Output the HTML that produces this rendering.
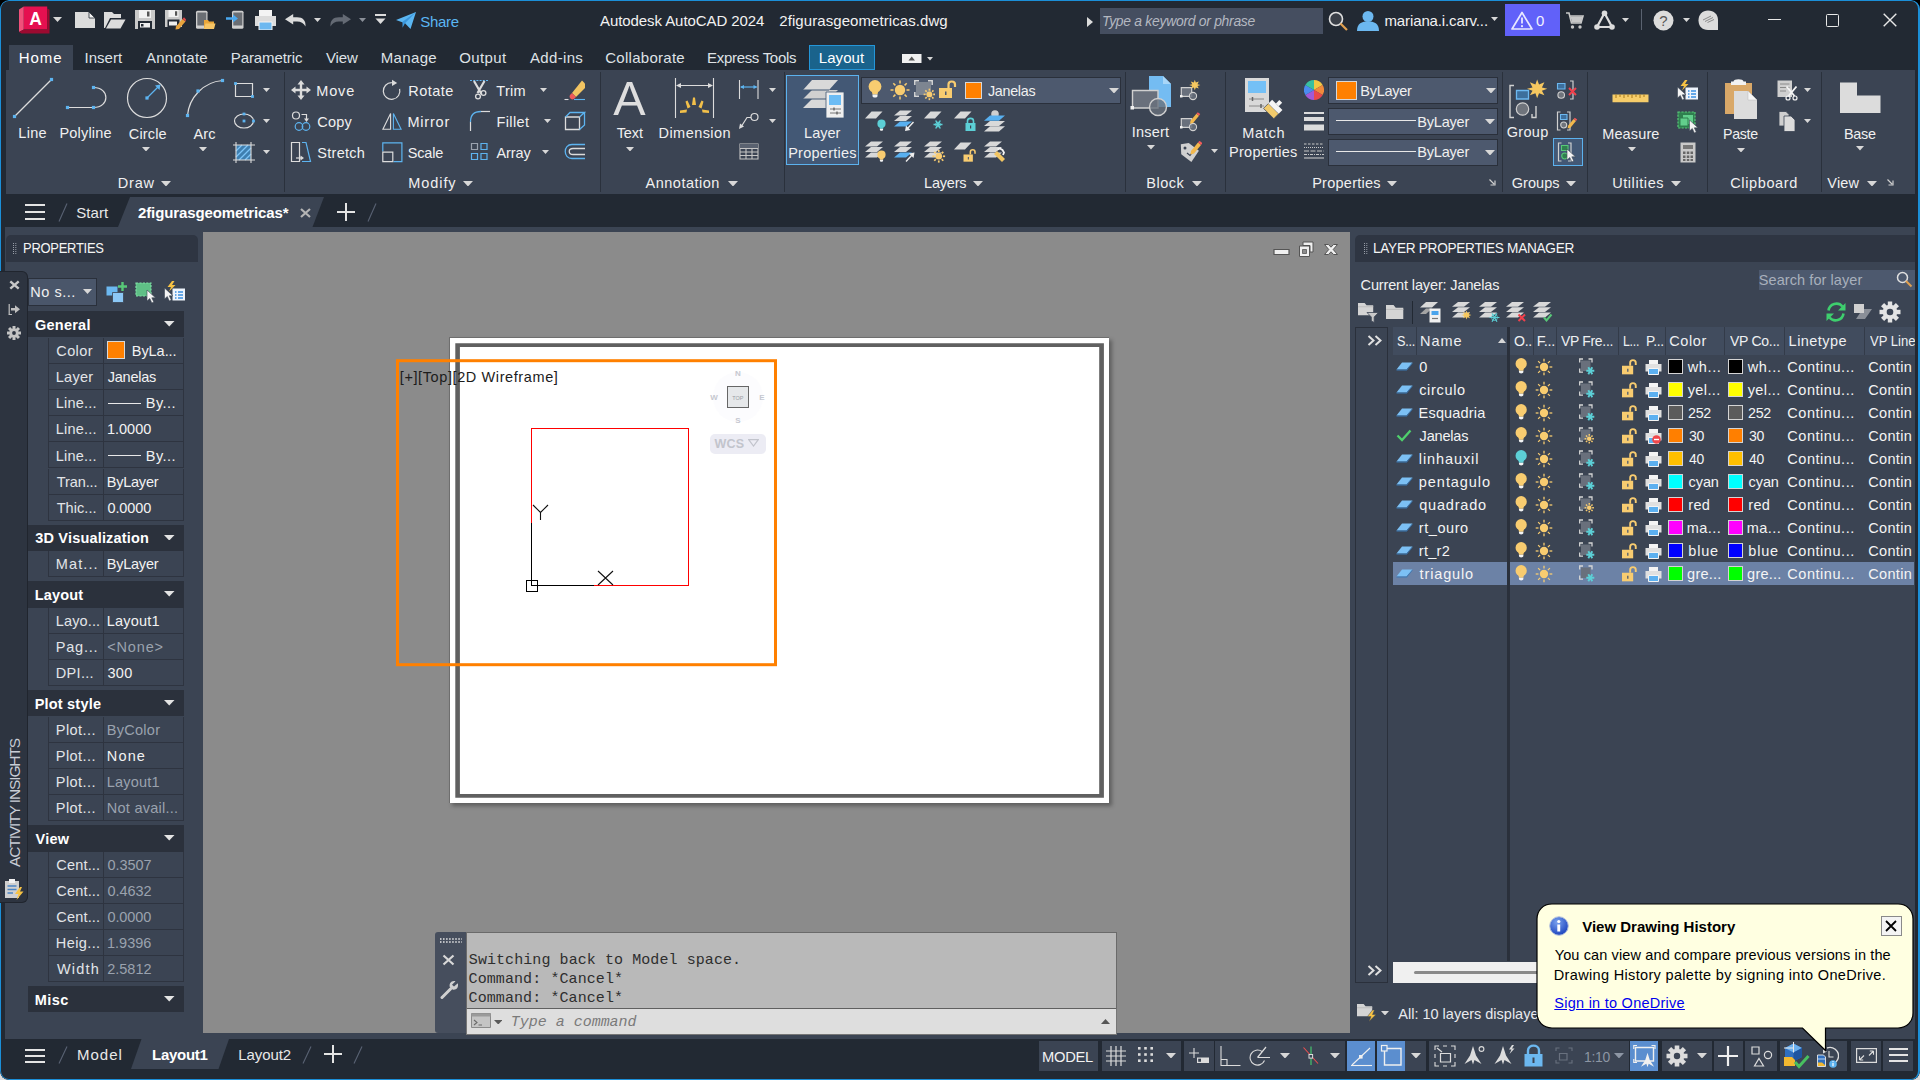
<!DOCTYPE html>
<html><head><meta charset="utf-8"><title>Autodesk AutoCAD 2024 - 2figurasgeometricas.dwg</title>
<style>
html,body{margin:0;padding:0;overflow:hidden}
body{background:linear-gradient(#000 0,#000 540px,#dcdcdc 540px,#dcdcdc 1080px) no-repeat;background-size:1920px 1080px;background-color:#000}
#w{position:relative;width:1920px;height:1080px;overflow:hidden;background:#222933;font-family:"Liberation Sans",sans-serif;font-size:14.5px;color:#f0f0f0;border-radius:9px 9px 9px 9px}
#w div,#w svg{position:absolute}
#w .t{white-space:nowrap;line-height:20px}
</style></head><body><div id="w">
<div style="left:6px;top:70px;width:1909px;height:124px;background:#3b4453;"></div>
<div style="left:5px;top:227px;width:1910px;height:812px;background:#3b4453;"></div>
<div style="left:203px;top:232px;width:1147px;height:801px;background:#8b8b8b;"></div>
<svg style="left:18px;top:5px;" width="33" height="30" viewBox="0 0 33 30"><path d="M1 4.5L5.8 1.5V24.5L1 27Z" fill="#f0507a"/><path d="M5.8 1.5H29.2V24.5H5.8Z" fill="#e51050"/><path d="M1 27L5.8 24.5H29.2V3.5L31.5 4.8V28.5H3.5Z" fill="#9c0a30"/></svg>
<div class="t" style="left:29.19px;top:9.44px;font-size:17.5px;color:#fff;font-weight:bold;">A</div>
<svg style="left:53px;top:17px;" width="9" height="5" viewBox="0 0 9 5"><path d="M0 0H9L4.5 5Z" fill="#d8d8d8"/></svg>
<svg style="left:75px;top:12px;" width="21" height="17" viewBox="0 0 21 17"><path d="M0 0H14L20 6V16H0Z" fill="#dcdcdc"/><path d="M14 0V6H20Z" fill="#f4f4f4" stroke="#222933" stroke-width="0.8"/></svg>
<svg style="left:104px;top:11px;" width="22" height="18" viewBox="0 0 22 18"><path d="M0 1H8L10 3H17V7H6L1 17H0Z" fill="#dcdcdc"/><path d="M7 8.5H21.5L16.5 17.5H2Z" fill="#dcdcdc"/></svg>
<svg style="left:135px;top:10.3px;" width="21" height="20" viewBox="0 0 21 20"><path d="M0 0H20V19H0Z" fill="#c9c9c9"/><path d="M4 0H16V8H4Z" fill="#f2f2f2"/><path d="M12 1.5H14.5V6.5H12Z" fill="#555"/><path d="M3 11H17V19H3Z" fill="#222933"/><path d="M5 13H15V17.5H5Z" fill="#eee"/><path d="M6 14H8.5V16.5H6Z" fill="#222933"/></svg>
<svg style="left:165px;top:10.3px;" width="21" height="20" viewBox="0 0 21 20"><path d="M0 0H17V17H0Z" fill="#c9c9c9"/><path d="M3.5 0H13.5V7H3.5Z" fill="#f2f2f2"/><path d="M10 1.2H12.2V5.8H10Z" fill="#555"/><path d="M2.5 9.5H14.5V17H2.5Z" fill="#222933"/><path d="M4 11.5H12V15.5H4Z" fill="#eee"/><path d="M11 16.5L17.5 9L20.5 11.5L14 19L10.5 19.5Z" fill="#e8a33c"/><path d="M17.5 9L19 7.2L21 9.5L20.5 11.5Z" fill="#e04a4a"/></svg>
<svg style="left:195px;top:10px;" width="21" height="20" viewBox="0 0 21 20"><rect x="1" y="0.8" width="11.5" height="18" rx="1.5" fill="#cfcfcf"/><rect x="2.3" y="2.5" width="9" height="13" fill="#6a6e74"/><path d="M9 10H13L14 11.5H19V19H9Z" fill="#e9a63a"/><path d="M10.5 13.5H20.5L19 19H9Z" fill="#f6c566"/></svg>
<svg style="left:226px;top:10px;" width="18" height="20" viewBox="0 0 18 20"><rect x="6" y="0.8" width="11.5" height="18" rx="1.5" fill="#cfcfcf"/><rect x="7.3" y="2.5" width="9" height="13" fill="#6a6e74"/><path d="M0 7.2H7V4.5L12 8.5L7 12.5V9.8H0Z" fill="#4aa8f0"/></svg>
<svg style="left:255px;top:10px;" width="21" height="20" viewBox="0 0 21 20"><path d="M4 0H17V6H4Z" fill="#f4f4f4"/><path d="M0 6H21V16H0Z" fill="#dcdcdc"/><path d="M4 12H17V20H4Z" fill="#6cb8f0" stroke="#f4f4f4" stroke-width="1"/></svg>
<svg style="left:285px;top:13.5px;" width="22" height="13" viewBox="0 0 22 13"><path d="M0 5.2L8.2 0V3.2H12C18 3.2 21 6.5 20.5 12.5C18.5 9 16 7.4 12 7.4H8.2V10.5Z" fill="#dcdcdc"/></svg>
<svg style="left:314px;top:18px;" width="7" height="4" viewBox="0 0 7 4"><path d="M0 0H7L3.5 4Z" fill="#d8d8d8"/></svg>
<svg style="left:329px;top:13.5px;" width="22" height="13" viewBox="0 0 22 13"><path d="M22 5.2L13.8 0V3.2H10C4 3.2 1 6.5 1.5 12.5C3.5 9 6 7.4 10 7.4H13.8V10.5Z" fill="#646a74"/></svg>
<svg style="left:359px;top:18px;" width="7" height="4" viewBox="0 0 7 4"><path d="M0 0H7L3.5 4Z" fill="#8a8f98"/></svg>
<svg style="left:375px;top:14px;" width="11" height="10" viewBox="0 0 11 10"><path d="M0 0H11V2H0Z" fill="#dcdcdc"/><path d="M0.5 4.5H10.5L5.5 10Z" fill="#dcdcdc"/></svg>
<svg style="left:396px;top:12px;" width="20" height="17" viewBox="0 0 20 17"><path d="M0 8L20 0L14.5 17L9 11.2Z" fill="#5bb6f2"/><path d="M9 11.2L20 0L6.5 9.8V15.8Z" fill="#3a96dc"/></svg>
<div class="t" style="left:420.32px;top:11.80px;font-size:15px;color:#5bb6f2;letter-spacing:-0.295px;">Share</div>
<div class="t" style="left:599.97px;top:10.80px;font-size:15px;color:#f2f2f2;letter-spacing:-0.074px;">Autodesk AutoCAD 2024</div>
<div class="t" style="left:779.25px;top:10.80px;font-size:15px;color:#f2f2f2;letter-spacing:0.076px;">2figurasgeometricas.dwg</div>
<svg style="left:1087px;top:17px;" width="6" height="10" viewBox="0 0 6 10"><path d="M0 0L6 5L0 10Z" fill="#dcdcdc"/></svg>
<div style="left:1100px;top:8px;width:223px;height:26px;background:#454e60;"></div>
<div class="t" style="left:1101.75px;top:10.98px;color:#b4b8c0;letter-spacing:-0.300px;font-style:italic;transform:scaleX(0.9600);transform-origin:left center;">Type a keyword or phrase</div>
<svg style="left:1328px;top:11px;" width="21" height="21" viewBox="0 0 21 21"><circle cx="8" cy="8" r="6.5" fill="#3a3f48" stroke="#e0e0e0" stroke-width="1.6"/><path d="M12.5 12.5L19 19" stroke="#e0a050" stroke-width="2.2"/></svg>
<svg style="left:1357px;top:11px;" width="22" height="20" viewBox="0 0 22 20"><circle cx="11" cy="5.5" r="5.5" fill="#6cb8f0"/><path d="M0 20C0 12 5 10.5 11 10.5S22 12 22 20Z" fill="#6cb8f0"/></svg>
<div class="t" style="left:1384.50px;top:11.30px;font-size:15px;color:#f2f2f2;letter-spacing:-0.126px;">mariana.i.carv...</div>
<svg style="left:1491px;top:17px;" width="7" height="4" viewBox="0 0 7 4"><path d="M0 0H7L3.5 4Z" fill="#d8d8d8"/></svg>
<div style="left:1505px;top:4px;width:55px;height:32px;background:#6161f9;"></div>
<svg style="left:1511px;top:11px;" width="22" height="19" viewBox="0 0 22 19"><path d="M11 1.5L21 18H1Z" fill="none" stroke="#e8e8ff" stroke-width="1.7" stroke-linejoin="round"/><path d="M11 6.5V12.5" stroke="#e8e8ff" stroke-width="1.8"/><circle cx="11" cy="15.2" r="1.1" fill="#e8e8ff"/></svg>
<div class="t" style="left:1535.91px;top:10.80px;font-size:15px;color:#f2f2ff;">0</div>
<svg style="left:1566px;top:12px;" width="18" height="18" viewBox="0 0 18 18"><path d="M0 1H3L5.5 11H15L17 4H4" fill="none" stroke="#c8c8c8" stroke-width="1.6"/><path d="M4.5 4.5H16.5L15 10.5H6Z" fill="#c8c8c8"/><circle cx="6.5" cy="15" r="1.7" fill="#c8c8c8"/><circle cx="14" cy="15" r="1.7" fill="#c8c8c8"/></svg>
<svg style="left:1594px;top:10px;" width="21" height="20" viewBox="0 0 21 20"><path d="M10.5 3L3 17H18Z" fill="none" stroke="#dcdcdc" stroke-width="2.2"/><circle cx="10.5" cy="3.2" r="2.8" fill="#dcdcdc"/><circle cx="3" cy="17" r="2.8" fill="#dcdcdc"/><circle cx="18" cy="17" r="2.8" fill="#dcdcdc"/></svg>
<svg style="left:1622px;top:18px;" width="7" height="4" viewBox="0 0 7 4"><path d="M0 0H7L3.5 4Z" fill="#d8d8d8"/></svg>
<div style="left:1641px;top:9px;width:1px;height:21px;background:#5a6270;"></div>
<svg style="left:1653px;top:10px;" width="21" height="21" viewBox="0 0 21 21"><circle cx="10.5" cy="10.5" r="10" fill="#dcdcdc"/></svg>
<div class="t" style="left:1659.30px;top:11.30px;font-size:15px;color:#555;">?</div>
<svg style="left:1683px;top:18px;" width="7" height="4" viewBox="0 0 7 4"><path d="M0 0H7L3.5 4Z" fill="#d8d8d8"/></svg>
<svg style="left:1698px;top:10px;" width="21" height="21" viewBox="0 0 21 21"><path d="M10 0.5C16 0.5 20 4.5 20 10V20H10C4 20 0.5 16 0.5 10.2C0.5 4.5 4.5 0.5 10 0.5Z" fill="#dcdcdc"/><path d="M5 10L13 6M7 11.5L15 7.5M9.5 12.5L16 9.5" stroke="#8a8a8a" stroke-width="1"/></svg>
<div style="left:1767.5px;top:19px;width:13px;height:1.4px;background:#e8e8e8;"></div>
<div style="left:1826px;top:14px;width:10.5px;height:10.5px;border:1.4px solid #e8e8e8;border-radius:1.5px"></div>
<svg style="left:1883px;top:13px;" width="14" height="14" viewBox="0 0 14 14"><path d="M0.7 0.7L13.3 13.3M13.3 0.7L0.7 13.3" stroke="#e8e8e8" stroke-width="1.4"/></svg>
<div style="left:9px;top:45px;width:64px;height:26px;background:#3b4453;"></div>
<div class="t" style="left:18.77px;top:48.10px;font-size:15px;color:#ffffff;letter-spacing:0.961px;">Home</div>
<div class="t" style="left:84.62px;top:48.10px;font-size:15px;color:#dfe2e6;">Insert</div>
<div class="t" style="left:145.97px;top:48.10px;font-size:15px;color:#dfe2e6;letter-spacing:0.235px;">Annotate</div>
<div class="t" style="left:230.77px;top:48.10px;font-size:15px;color:#dfe2e6;letter-spacing:-0.099px;">Parametric</div>
<div class="t" style="left:325.93px;top:48.10px;font-size:15px;color:#dfe2e6;letter-spacing:-0.071px;">View</div>
<div class="t" style="left:380.77px;top:48.10px;font-size:15px;color:#dfe2e6;letter-spacing:0.338px;">Manage</div>
<div class="t" style="left:459.29px;top:48.10px;font-size:15px;color:#dfe2e6;letter-spacing:0.358px;">Output</div>
<div class="t" style="left:529.97px;top:48.10px;font-size:15px;color:#dfe2e6;letter-spacing:0.335px;">Add-ins</div>
<div class="t" style="left:605.24px;top:48.10px;font-size:15px;color:#dfe2e6;letter-spacing:0.271px;">Collaborate</div>
<div class="t" style="left:707.07px;top:48.10px;font-size:15px;color:#dfe2e6;letter-spacing:-0.300px;transform:scaleX(0.9997);transform-origin:left center;">Express Tools</div>
<div style="left:809px;top:45px;width:64px;height:23px;background:#1a638c;border:1px solid #2496d8"></div>
<div class="t" style="left:818.77px;top:48.10px;font-size:15px;color:#fff;letter-spacing:0.061px;">Layout</div>
<svg style="left:902px;top:54px;" width="20" height="9" viewBox="0 0 20 9"><rect width="19.5" height="9" fill="#f0f0f0"/><path d="M6.5 6.5L9.7 2.5L13 6.5Z" fill="#555"/></svg>
<svg style="left:927px;top:57px;" width="6" height="3.5" viewBox="0 0 6 3.5"><path d="M0 0H6L3.0 3.5Z" fill="#d8d8d8"/></svg>
<div style="left:283.5px;top:72px;width:1.2px;height:120px;background:#2a313c;"></div>
<div style="left:599.5px;top:72px;width:1.2px;height:120px;background:#2a313c;"></div>
<div style="left:783.5px;top:72px;width:1.2px;height:120px;background:#2a313c;"></div>
<div style="left:1124.5px;top:72px;width:1.2px;height:120px;background:#2a313c;"></div>
<div style="left:1224.5px;top:72px;width:1.2px;height:120px;background:#2a313c;"></div>
<div style="left:1501.5px;top:72px;width:1.2px;height:120px;background:#2a313c;"></div>
<div style="left:1586.5px;top:72px;width:1.2px;height:120px;background:#2a313c;"></div>
<div style="left:1707px;top:72px;width:1.2px;height:120px;background:#2a313c;"></div>
<div style="left:1820.5px;top:72px;width:1.2px;height:120px;background:#2a313c;"></div>
<div class="t" style="left:117.81px;top:172.98px;letter-spacing:0.773px;">Draw</div>
<svg style="left:161px;top:180.5px;" width="10" height="5.5" viewBox="0 0 10 5.5"><path d="M0 0H10L5.0 5.5Z" fill="#d8d8d8"/></svg>
<div class="t" style="left:408.31px;top:172.98px;letter-spacing:0.922px;">Modify</div>
<svg style="left:463px;top:180.5px;" width="10" height="5.5" viewBox="0 0 10 5.5"><path d="M0 0H10L5.0 5.5Z" fill="#d8d8d8"/></svg>
<div class="t" style="left:645.57px;top:172.98px;letter-spacing:0.504px;">Annotation</div>
<svg style="left:727.5px;top:180.5px;" width="10" height="5.5" viewBox="0 0 10 5.5"><path d="M0 0H10L5.0 5.5Z" fill="#d8d8d8"/></svg>
<div class="t" style="left:924.11px;top:172.98px;letter-spacing:-0.221px;">Layers</div>
<svg style="left:973px;top:180.5px;" width="10" height="5.5" viewBox="0 0 10 5.5"><path d="M0 0H10L5.0 5.5Z" fill="#d8d8d8"/></svg>
<div class="t" style="left:1146.31px;top:172.98px;letter-spacing:0.478px;">Block</div>
<svg style="left:1192px;top:180.5px;" width="10" height="5.5" viewBox="0 0 10 5.5"><path d="M0 0H10L5.0 5.5Z" fill="#d8d8d8"/></svg>
<div class="t" style="left:1312.21px;top:172.98px;letter-spacing:0.248px;">Properties</div>
<svg style="left:1387px;top:180.5px;" width="10" height="5.5" viewBox="0 0 10 5.5"><path d="M0 0H10L5.0 5.5Z" fill="#d8d8d8"/></svg>
<div class="t" style="left:1511.77px;top:172.98px;letter-spacing:0.041px;">Groups</div>
<svg style="left:1566px;top:180.5px;" width="10" height="5.5" viewBox="0 0 10 5.5"><path d="M0 0H10L5.0 5.5Z" fill="#d8d8d8"/></svg>
<div class="t" style="left:1612.18px;top:172.98px;letter-spacing:0.577px;">Utilities</div>
<svg style="left:1671px;top:180.5px;" width="10" height="5.5" viewBox="0 0 10 5.5"><path d="M0 0H10L5.0 5.5Z" fill="#d8d8d8"/></svg>
<div class="t" style="left:1730.26px;top:172.98px;letter-spacing:0.626px;">Clipboard</div>
<div class="t" style="left:1827.34px;top:172.98px;letter-spacing:0.154px;">View</div>
<svg style="left:1867px;top:180.5px;" width="10" height="5.5" viewBox="0 0 10 5.5"><path d="M0 0H10L5.0 5.5Z" fill="#d8d8d8"/></svg>
<svg style="left:1489px;top:179px;" width="7" height="7" viewBox="0 0 7 7"><path d="M0.5 0.5L5 5M6 1.5V6H1.5" stroke="#cfcfcf" stroke-width="1.2" fill="none"/></svg>
<svg style="left:1887px;top:179px;" width="7" height="7" viewBox="0 0 7 7"><path d="M0.5 0.5L5 5M6 1.5V6H1.5" stroke="#cfcfcf" stroke-width="1.2" fill="none"/></svg>
<svg style="left:10px;top:76px;" width="50" height="50" viewBox="0 0 50 50"><path d="M4.5 40.5L41.5 3.5" stroke="#dcdcdc" stroke-width="1.2"/><rect x="2.9" y="38.9" width="3.2" height="3.2" fill="#5db4f0"/><rect x="39.9" y="1.9" width="3.2" height="3.2" fill="#5db4f0"/></svg>
<div class="t" style="left:18.31px;top:122.98px;letter-spacing:0.307px;">Line</div>
<svg style="left:62px;top:82px;" width="48" height="30" viewBox="0 0 48 30"><path d="M5.5 25.5H31.5M31.5 25.5C48 25.5 48 5.5 31.5 5.5" stroke="#dcdcdc" stroke-width="1.2" fill="none"/><rect x="3.9" y="23.9" width="3.2" height="3.2" fill="#5db4f0"/><rect x="29.9" y="23.9" width="3.2" height="3.2" fill="#5db4f0"/><rect x="29.9" y="3.9" width="3.2" height="3.2" fill="#5db4f0"/></svg>
<div class="t" style="left:59.41px;top:122.98px;letter-spacing:0.208px;">Polyline</div>
<svg style="left:124px;top:76px;" width="46" height="46" viewBox="0 0 46 46"><circle cx="23" cy="22" r="19.5" stroke="#dcdcdc" stroke-width="1.2" fill="none"/><path d="M23 22L35 10" stroke="#5db4f0" stroke-width="1.3"/><path d="M36.5 8.5L35.5 14L31 9.5Z" fill="#5db4f0"/><rect x="21.4" y="20.4" width="3.2" height="3.2" fill="#5db4f0"/></svg>
<div class="t" style="left:128.76px;top:123.68px;letter-spacing:0.165px;">Circle</div>
<svg style="left:142px;top:146.5px;" width="8" height="4.5" viewBox="0 0 8 4.5"><path d="M0 0H8L4.0 4.5Z" fill="#d8d8d8"/></svg>
<svg style="left:183px;top:76px;" width="44" height="44" viewBox="0 0 44 44"><path d="M4.5 39.5C6 22 20 6 39.5 4.5" stroke="#dcdcdc" stroke-width="1.2" fill="none"/><rect x="2.9" y="37.9" width="3.2" height="3.2" fill="#5db4f0"/><rect x="13.4" y="13.4" width="3.2" height="3.2" fill="#5db4f0"/><rect x="37.9" y="2.9" width="3.2" height="3.2" fill="#5db4f0"/></svg>
<div class="t" style="left:193.47px;top:123.68px;letter-spacing:0.080px;">Arc</div>
<svg style="left:199px;top:146.5px;" width="8" height="4.5" viewBox="0 0 8 4.5"><path d="M0 0H8L4.0 4.5Z" fill="#d8d8d8"/></svg>
<svg style="left:232px;top:80px;" width="24" height="18" viewBox="0 0 24 18"><path d="M3.5 3.5H20.5V16.5H3.5Z" stroke="#dcdcdc" stroke-width="1.2" fill="none"/><rect x="2.1" y="2.1" width="2.8" height="2.8" fill="#5db4f0"/><rect x="19.1" y="15.1" width="2.8" height="2.8" fill="#5db4f0"/></svg>
<svg style="left:263px;top:87.5px;" width="7" height="4" viewBox="0 0 7 4"><path d="M0 0H7L3.5 4Z" fill="#d8d8d8"/></svg>
<svg style="left:232px;top:111px;" width="24" height="20" viewBox="0 0 24 20"><ellipse cx="12" cy="10" rx="9.5" ry="7" stroke="#dcdcdc" stroke-width="1.2" fill="none"/><rect x="10.6" y="8.6" width="2.8" height="2.8" fill="#5db4f0"/><rect x="10.6" y="1.6" width="2.8" height="2.8" fill="#5db4f0"/><rect x="20.1" y="8.6" width="2.8" height="2.8" fill="#5db4f0"/></svg>
<svg style="left:263px;top:118.5px;" width="7" height="4" viewBox="0 0 7 4"><path d="M0 0H7L3.5 4Z" fill="#d8d8d8"/></svg>
<svg style="left:232px;top:141px;" width="24" height="22" viewBox="0 0 24 22"><path d="M4 4H19V19H4Z" fill="#3f7fb0"/><path d="M4 10L10 4M4 16L16 4M7 19L19 7M13 19L19 13" stroke="#7cc4f8" stroke-width="1.3"/><path d="M4 1V22M19 1V22M1 4H23M1 19H23" stroke="#dcdcdc" stroke-width="1.1"/></svg>
<svg style="left:263px;top:149.5px;" width="7" height="4" viewBox="0 0 7 4"><path d="M0 0H7L3.5 4Z" fill="#d8d8d8"/></svg>
<svg style="left:290px;top:79px;" width="22" height="22" viewBox="0 0 22 22"><path d="M11 1L14.5 5.5H12.2V9.8H16.5V7.5L21 11L16.5 14.5V12.2H12.2V16.5H14.5L11 21L7.5 16.5H9.8V12.2H5.5V14.5L1 11L5.5 7.5V9.8H9.8V5.5H7.5Z" fill="#dcdcdc"/></svg>
<div class="t" style="left:316.31px;top:81.18px;letter-spacing:0.826px;">Move</div>
<svg style="left:290px;top:110px;" width="22" height="22" viewBox="0 0 22 22"><circle cx="6" cy="5.5" r="3.5" stroke="#dcdcdc" stroke-width="1.2" fill="none"/><path d="M11.5 4.5H16.5V9" stroke="#dcdcdc" stroke-width="1.2" fill="none"/><path d="M14 8.5H19L16.5 12Z" fill="#dcdcdc"/><circle cx="9" cy="16.5" r="3.8" stroke="#5db4f0" stroke-width="1.2" fill="none"/><circle cx="16" cy="16.5" r="3.8" stroke="#5db4f0" stroke-width="1.2" fill="none"/></svg>
<div class="t" style="left:317.26px;top:111.88px;letter-spacing:0.238px;">Copy</div>
<svg style="left:290px;top:141px;" width="22" height="22" viewBox="0 0 22 22"><path d="M1.5 1.5H9.5V20.5H1.5Z" stroke="#dcdcdc" stroke-width="1.2" fill="none"/><path d="M12 1.5H16L20.5 20.5H12" stroke="#5db4f0" stroke-width="1.2" fill="none"/><path d="M6 17H11" stroke="#dcdcdc" stroke-width="1.2"/><path d="M10.5 14.5L14 17L10.5 19.5Z" fill="#dcdcdc"/></svg>
<div class="t" style="left:317.34px;top:142.78px;letter-spacing:0.261px;">Stretch</div>
<svg style="left:382px;top:79px;" width="22" height="22" viewBox="0 0 22 22"><path d="M17.6 9.8A8.3 8.3 0 1 1 9.8 3.7" stroke="#dcdcdc" stroke-width="1.2" fill="none"/><path d="M10 0.8L15.2 4L10 7Z" fill="#dcdcdc"/></svg>
<div class="t" style="left:408.31px;top:81.18px;letter-spacing:0.483px;">Rotate</div>
<svg style="left:382px;top:111px;" width="22" height="20" viewBox="0 0 22 20"><path d="M8.6 2.5V18.3H0.9Z" stroke="#dcdcdc" stroke-width="1.1" fill="none" stroke-linejoin="miter"/><path d="M11.4 2.5V18.3H19.1Z" stroke="#5db4f0" stroke-width="1.1" fill="none" stroke-linejoin="miter"/></svg>
<div class="t" style="left:407.51px;top:111.88px;letter-spacing:0.776px;">Mirror</div>
<svg style="left:382px;top:141px;" width="22" height="22" viewBox="0 0 22 22"><path d="M0.8 10.5V1.9H19.9V20.6H11.5" stroke="#5db4f0" stroke-width="1.2" fill="none"/><path d="M0.8 11.2H10.8V20.6H0.8Z" stroke="#dcdcdc" stroke-width="1.2" fill="none"/></svg>
<div class="t" style="left:407.84px;top:142.78px;letter-spacing:-0.192px;">Scale</div>
<svg style="left:469px;top:79px;" width="22" height="22" viewBox="0 0 22 22"><path d="M1 1.5H20" stroke="#5db4f0" stroke-width="1.2" stroke-dasharray="2 1.2"/><path d="M5 2L12.5 15M15.5 2L8.5 14" stroke="#dcdcdc" stroke-width="2.2"/><circle cx="9" cy="17.5" r="2.4" stroke="#dcdcdc" stroke-width="1.3" fill="none"/><circle cx="14.5" cy="14" r="2.4" stroke="#dcdcdc" stroke-width="1.3" fill="none"/></svg>
<div class="t" style="left:496.37px;top:81.18px;letter-spacing:0.244px;">Trim</div>
<svg style="left:540px;top:87.5px;" width="7" height="4" viewBox="0 0 7 4"><path d="M0 0H7L3.5 4Z" fill="#d8d8d8"/></svg>
<svg style="left:469px;top:110px;" width="22" height="22" viewBox="0 0 22 22"><path d="M1.5 21V12" stroke="#dcdcdc" stroke-width="1.2"/><path d="M1.5 12C1.5 5 5 1.5 12 1.5" stroke="#5db4f0" stroke-width="1.3" fill="none"/><path d="M12 1.5H21" stroke="#dcdcdc" stroke-width="1.2"/></svg>
<div class="t" style="left:496.41px;top:111.88px;letter-spacing:0.416px;">Fillet</div>
<svg style="left:544px;top:118.5px;" width="7" height="4" viewBox="0 0 7 4"><path d="M0 0H7L3.5 4Z" fill="#d8d8d8"/></svg>
<svg style="left:470px;top:142px;" width="20" height="20" viewBox="0 0 20 20"><path d="M1.5 1.5H7.5V7.5H1.5Z" stroke="#9aa2ae" stroke-width="1.2" fill="none"/><path d="M11 1.5H17V7.5H11Z" stroke="#5db4f0" stroke-width="1.2" fill="none"/><path d="M1.5 11.5H7.5V17.5H1.5ZM11 11.5H17V17.5H11Z" stroke="#5db4f0" stroke-width="1.2" fill="none"/></svg>
<div class="t" style="left:496.47px;top:142.78px;letter-spacing:-0.096px;">Array</div>
<svg style="left:542px;top:149.5px;" width="7" height="4" viewBox="0 0 7 4"><path d="M0 0H7L3.5 4Z" fill="#d8d8d8"/></svg>
<svg style="left:564px;top:79px;" width="22" height="22" viewBox="0 0 22 22"><path d="M8 14L18 1.5L21 4.5L21 9L12 18Z" fill="#f2c562"/><path d="M6.5 15.5L8 14L12 18L10.5 19.5C9 21 7.5 20.5 6.5 19.5S5 17 6.5 15.5Z" fill="#f05a5a"/><path d="M0.5 20.5H4.5" stroke="#dcdcdc" stroke-width="1.1"/><path d="M10 20.5H21" stroke="#5db4f0" stroke-width="1.1"/></svg>
<svg style="left:564px;top:111px;" width="22" height="20" viewBox="0 0 22 20"><path d="M1.5 6H15.5V18.5H1.5Z" stroke="#dcdcdc" stroke-width="1.3" fill="none"/><path d="M1.5 6L6 1.5H20.5L15.5 6M20.5 1.5V14L15.5 18.5" stroke="#5db4f0" stroke-width="1.3" fill="none"/></svg>
<svg style="left:564px;top:143px;" width="22" height="18" viewBox="0 0 22 18"><path d="M21 1.5H8C-1 1.5 -1 15.5 8 15.5H21" stroke="#5db4f0" stroke-width="1.3" fill="none"/><path d="M21 5.5H9C4 5.5 4 11.5 9 11.5H21" stroke="#dcdcdc" stroke-width="1.3" fill="none"/></svg>
<div class="t" style="left:613.31px;top:88.19px;font-size:48.5px;color:#dedede;">A</div>
<div class="t" style="left:616.67px;top:123.18px;letter-spacing:-0.053px;">Text</div>
<svg style="left:626px;top:146.5px;" width="8" height="4.5" viewBox="0 0 8 4.5"><path d="M0 0H8L4.0 4.5Z" fill="#d8d8d8"/></svg>
<svg style="left:674px;top:77px;" width="42" height="42" viewBox="0 0 42 42"><path d="M1.5 1V41M39.5 1V41" stroke="#dcdcdc" stroke-width="1.1"/><path d="M3 8.5H38" stroke="#dcdcdc" stroke-width="1.1"/><path d="M2 8.5L7 6V11ZM39 8.5L34 6V11Z" fill="#dcdcdc"/><g fill="#f2c04a"><path d="M19 20.5L21 20.5L22 28H18Z"/><path d="M11.5 24.5L13.5 23.5L16.5 30L13.5 31.5Z"/><path d="M29.5 24.5L27.5 23.5L24.5 30L27.5 31.5Z"/><path d="M6 33.5L13 32.5L12.5 35.5L6 36Z"/><path d="M35 33.5L28 32.5L28.5 35.5L35 36Z"/></g></svg>
<div class="t" style="left:658.51px;top:122.98px;letter-spacing:0.454px;">Dimension</div>
<svg style="left:738px;top:80px;" width="22" height="19" viewBox="0 0 22 19"><path d="M1.5 0V19M20 0V19" stroke="#dcdcdc" stroke-width="1.1"/><path d="M3 7H18.5" stroke="#5db4f0" stroke-width="1.2"/><path d="M2 7L6 5V9ZM19.5 7L15.5 5V9Z" fill="#5db4f0"/></svg>
<svg style="left:769px;top:87.5px;" width="7" height="4" viewBox="0 0 7 4"><path d="M0 0H7L3.5 4Z" fill="#d8d8d8"/></svg>
<svg style="left:738px;top:112px;" width="22" height="18" viewBox="0 0 22 18"><circle cx="16.5" cy="5" r="3.5" stroke="#dcdcdc" stroke-width="1.2" fill="none"/><path d="M13 5.5H9L3 15" stroke="#dcdcdc" stroke-width="1.2" fill="none"/><path d="M1 17L2 11.5L6 14.5Z" fill="#dcdcdc"/></svg>
<svg style="left:769px;top:118.5px;" width="7" height="4" viewBox="0 0 7 4"><path d="M0 0H7L3.5 4Z" fill="#d8d8d8"/></svg>
<svg style="left:739px;top:143px;" width="20" height="17" viewBox="0 0 20 17"><path d="M1 1H19V16H1ZM1 5.5H19M1 9H19M1 12.5H19M7 5.5V16M13 5.5V16" stroke="#c4c4c4" stroke-width="1.1" fill="none"/><path d="M1 1H19V5H1Z" fill="#5a6270"/></svg>
<div style="left:786px;top:75px;width:71px;height:87.5px;background:#435875;border:1px solid #5cb2ee"></div>
<svg style="left:802.5px;top:75.5px;" width="44" height="42" viewBox="0 0 44 42"><path d="M9 4H35L26 14H0Z" fill="#d9d9d9"/><path d="M9 14H35L26 23H0Z" fill="#d0d0d0"/><path d="M9 23H35L26 32H0Z" fill="#d9d9d9"/><path d="M0 14H26M0 23H26" stroke="#435875" stroke-width="1.2"/><path d="M23 16H41V42H23Z" fill="#efefef" stroke="#435875" stroke-width="0.8"/><path d="M26 19H38V29H26Z" fill="#6cbcf4"/><path d="M27 33H38M27 37H38" stroke="#777" stroke-width="1"/><path d="M31 31.5V34.5M34 35.5V38.5" stroke="#555" stroke-width="1.2"/></svg>
<div class="t" style="left:804.11px;top:123.18px;letter-spacing:-0.035px;">Layer</div>
<div class="t" style="left:788.21px;top:142.68px;letter-spacing:0.248px;">Properties</div>
<div style="left:860.8px;top:76.5px;width:258px;height:25.5px;background:#4d596e;border:1px solid #2a303b"></div>
<svg style="left:868px;top:80px;" width="15" height="19" viewBox="0 0 15 19"><g transform="scale(1.0)"><circle cx="7" cy="6.5" r="6.4" fill="#f8cc70"/><path d="M3.8 11H10.2L9.5 14.5H4.5Z" fill="#f8cc70"/><path d="M4.5 14.5H9.5V16C9.5 18 4.5 18 4.5 16Z" fill="#f4f4f4"/></g></svg>
<svg style="left:889.5px;top:80px;" width="20" height="20" viewBox="0 0 20 20"><circle cx="10" cy="10" r="5.2" fill="#f8cc70"/><path d="M16.50 10.00L19.50 10.00" stroke="#f8cc70" stroke-width="1.5"/><path d="M14.60 14.60L16.72 16.72" stroke="#f8cc70" stroke-width="1.5"/><path d="M10.00 16.50L10.00 19.50" stroke="#f8cc70" stroke-width="1.5"/><path d="M5.40 14.60L3.28 16.72" stroke="#f8cc70" stroke-width="1.5"/><path d="M3.50 10.00L0.50 10.00" stroke="#f8cc70" stroke-width="1.5"/><path d="M5.40 5.40L3.28 3.28" stroke="#f8cc70" stroke-width="1.5"/><path d="M10.00 3.50L10.00 0.50" stroke="#f8cc70" stroke-width="1.5"/><path d="M14.60 5.40L16.72 3.28" stroke="#f8cc70" stroke-width="1.5"/></svg>
<svg style="left:914px;top:80px;" width="21" height="21" viewBox="0 0 21 21"><g transform="scale(1.0)"><path d="M2 2H17V15H2Z" fill="#7d8591"/><path d="M0.8 5V0.8H5M14 0.8H18.2V5M0.8 12V16.2H5" stroke="#d6d6d6" stroke-width="1.5" fill="none"/><g transform="translate(9.5,8.5) scale(0.62)"><circle cx="9.5" cy="9.5" r="4.8" fill="#f8cc70"/><path d="M15.60 9.50L18.80 9.50" stroke="#f8cc70" stroke-width="2.6"/><path d="M13.81 13.81L16.08 16.08" stroke="#f8cc70" stroke-width="2.6"/><path d="M9.50 15.60L9.50 18.80" stroke="#f8cc70" stroke-width="2.6"/><path d="M5.19 13.81L2.92 16.08" stroke="#f8cc70" stroke-width="2.6"/><path d="M3.40 9.50L0.20 9.50" stroke="#f8cc70" stroke-width="2.6"/><path d="M5.19 5.19L2.92 2.92" stroke="#f8cc70" stroke-width="2.6"/><path d="M9.50 3.40L9.50 0.20" stroke="#f8cc70" stroke-width="2.6"/><path d="M13.81 5.19L16.08 2.92" stroke="#f8cc70" stroke-width="2.6"/></g></g></svg>
<svg style="left:939px;top:79px;" width="18" height="21" viewBox="0 0 18 21"><g transform="scale(1.0)"><path d="M0 9H13V19H0Z" fill="#f8cc70"/><path d="M9.5 9V5.5C9.5 1.5 16 1.5 16 5.5V8" stroke="#f8cc70" stroke-width="2.2" fill="none"/><path d="M6 12.5H7.5V16H6Z" fill="#4d596e"/></g></svg>
<div style="left:964.5px;top:81.5px;width:15.5px;height:15.5px;background:#ff8000;border:1px solid #d8d8d8"></div>
<div class="t" style="left:987.98px;top:80.68px;letter-spacing:-0.300px;transform:scaleX(0.9868);transform-origin:left center;">Janelas</div>
<svg style="left:1109px;top:87.5px;" width="10" height="5.5" viewBox="0 0 10 5.5"><path d="M0 0H10L5.0 5.5Z" fill="#d8d8d8"/></svg>
<svg style="left:865px;top:110px;" width="23" height="22" viewBox="0 0 23 22"><path d="M6.5 1.5H17.5L11.0 8.5H0Z" fill="#d9d9d9"/><g transform="translate(12,9.5) scale(0.64)"><g transform="scale(1.0)"><circle cx="7" cy="6.5" r="6.4" fill="#5ccfd6"/><path d="M3.8 11H10.2L9.5 14.5H4.5Z" fill="#5ccfd6"/><path d="M4.5 14.5H9.5V16C9.5 18 4.5 18 4.5 16Z" fill="#f4f4f4"/></g></g></svg>
<svg style="left:894px;top:110px;" width="23" height="22" viewBox="0 0 23 22"><path d="M6 0.5H18L12 5.5H0Z" fill="#d9d9d9"/><path d="M6 6.0H18L12 11.0H0Z" fill="#d9d9d9"/><path d="M6 11.5H18L12 16.5H0Z" fill="#58b0f0"/><path d="M19.5 12L13 19" stroke="#eee" stroke-width="1.4"/><path d="M11 21L12 15.5L16.5 20Z" fill="#eee"/></svg>
<svg style="left:924px;top:110px;" width="23" height="22" viewBox="0 0 23 22"><path d="M6.5 1.5H17.5L11.0 8.5H0Z" fill="#d9d9d9"/><g transform="translate(14,14.5)" stroke="#5ccfd6" stroke-width="1.5"><path d="M-4.5 0H4.5M-2.3 -4L2.3 4M2.3 -4L-2.3 4"/><circle r="2.4" fill="none" stroke-width="1"/></g></svg>
<svg style="left:954px;top:110px;" width="23" height="22" viewBox="0 0 23 22"><path d="M6.5 1.5H17.5L11.0 8.5H0Z" fill="#d9d9d9"/><path d="M11.5 13H21.5V21H11.5Z" fill="#5ccfd6"/><path d="M13.5 13V11C13.5 7.5 19.5 7.5 19.5 11V13" stroke="#5ccfd6" stroke-width="1.6" fill="none"/><path d="M16 15.5H17.2V18.5H16Z" fill="#3b4453"/></svg>
<svg style="left:984px;top:110px;" width="23" height="22" viewBox="0 0 23 22"><circle cx="11" cy="4" r="3.8" fill="#cfcfcf"/><path d="M6 5.5H21L15 10.7H0Z" fill="#58b0f0"/><path d="M6 10.9H21L15 16.1H0Z" fill="#d9d9d9"/><path d="M6 16.3H21L15 21.5H0Z" fill="#d9d9d9"/></svg>
<svg style="left:865px;top:141px;" width="23" height="22" viewBox="0 0 23 22"><path d="M6 0.5H18L12 5.5H0Z" fill="#d9d9d9"/><path d="M6 6.0H18L12 11.0H0Z" fill="#d9d9d9"/><path d="M6 11.5H18L12 16.5H0Z" fill="#d9d9d9"/><g transform="translate(12,9.5) scale(0.64)"><g transform="scale(1.0)"><circle cx="7" cy="6.5" r="6.4" fill="#f8cc70"/><path d="M3.8 11H10.2L9.5 14.5H4.5Z" fill="#f8cc70"/><path d="M4.5 14.5H9.5V16C9.5 18 4.5 18 4.5 16Z" fill="#f4f4f4"/></g></g></svg>
<svg style="left:894px;top:141px;" width="23" height="22" viewBox="0 0 23 22"><path d="M6 0.5H18L12 5.5H0Z" fill="#d9d9d9"/><path d="M6 6.0H18L12 11.0H0Z" fill="#d9d9d9"/><path d="M6 11.5H18L12 16.5H0Z" fill="#58b0f0"/><path d="M12 20.5L18.5 13.5" stroke="#eee" stroke-width="1.4"/><path d="M20.5 11.5L19.5 17L15 12.5Z" fill="#eee"/></svg>
<svg style="left:924px;top:141px;" width="23" height="22" viewBox="0 0 23 22"><path d="M6 0.5H18L12 5.5H0Z" fill="#d9d9d9"/><path d="M6 6.0H18L12 11.0H0Z" fill="#d9d9d9"/><path d="M6 11.5H18L12 16.5H0Z" fill="#d9d9d9"/><g transform="translate(8.5,9) scale(0.66)"><circle cx="9.5" cy="9.5" r="5" fill="#f8cc70"/><path d="M15.80 9.50L19.10 9.50" stroke="#f8cc70" stroke-width="2.6"/><path d="M13.95 13.95L16.29 16.29" stroke="#f8cc70" stroke-width="2.6"/><path d="M9.50 15.80L9.50 19.10" stroke="#f8cc70" stroke-width="2.6"/><path d="M5.05 13.95L2.71 16.29" stroke="#f8cc70" stroke-width="2.6"/><path d="M3.20 9.50L-0.10 9.50" stroke="#f8cc70" stroke-width="2.6"/><path d="M5.05 5.05L2.71 2.71" stroke="#f8cc70" stroke-width="2.6"/><path d="M9.50 3.20L9.50 -0.10" stroke="#f8cc70" stroke-width="2.6"/><path d="M13.95 5.05L16.29 2.71" stroke="#f8cc70" stroke-width="2.6"/></g></svg>
<svg style="left:954px;top:141px;" width="23" height="22" viewBox="0 0 23 22"><path d="M6.5 1.5H17.5L11.0 8.5H0Z" fill="#d9d9d9"/><g transform="translate(9.5,7) scale(0.72)"><g transform="scale(1.0)"><path d="M0 9H13V19H0Z" fill="#f8cc70"/><path d="M9.5 9V5.5C9.5 1.5 16 1.5 16 5.5V8" stroke="#f8cc70" stroke-width="2.2" fill="none"/><path d="M6 12.5H7.5V16H6Z" fill="#4d596e"/></g></g></svg>
<svg style="left:984px;top:141px;" width="23" height="22" viewBox="0 0 23 22"><path d="M6 0.5H18L12 5.5H0Z" fill="#d9d9d9"/><path d="M6 6.0H18L12 11.0H0Z" fill="#d9d9d9"/><path d="M6 11.5H18L12 16.5H0Z" fill="#d9d9d9"/><path d="M10 13L13 10L21 18L18 21Z" fill="#f2c562"/><path d="M13.5 8.5L16 7.5L18.5 9L20 11.5L19 14" stroke="#f4f4f4" stroke-width="1.8" fill="none"/></svg>
<svg style="left:1130px;top:76px;" width="43" height="41" viewBox="0 0 43 41"><path d="M19 0H33L41 8V31H19Z" fill="#74bcf2"/><path d="M33 0V8H41Z" fill="#a8d6f8"/><path d="M2.5 14.5H28V32H2.5Z" fill="#69707c" stroke="#d0d0d0" stroke-width="1.4"/><circle cx="28" cy="31" r="8.5" fill="#69707c" fill-opacity="0.8" stroke="#d0d0d0" stroke-width="1.4"/><rect x="0.5" y="30" width="3.5" height="3.5" fill="#f0f0f0"/></svg>
<div class="t" style="left:1131.66px;top:121.98px;letter-spacing:0.236px;">Insert</div>
<svg style="left:1146.5px;top:145px;" width="8" height="4.5" viewBox="0 0 8 4.5"><path d="M0 0H8L4.0 4.5Z" fill="#d8d8d8"/></svg>
<svg style="left:1180px;top:79px;" width="22" height="22" viewBox="0 0 22 22"><path d="M1.3 8.7H11.7V17.3H1.3Z" fill="#69707c" stroke="#d0d0d0" stroke-width="1.2"/><circle cx="13" cy="17" r="3.6" fill="#69707c" fill-opacity="0.85" stroke="#d0d0d0" stroke-width="1.1"/><rect x="0" y="16" width="2.5" height="2.5" fill="#f0f0f0"/><g transform="translate(2.8,0.8) scale(0.8)"><path d="M15 0L16.3 3.5L20 2L18.3 5.5L22 6.5L18.3 7.8L20 11L16.3 9.5L15 13L13.8 9.5L10 11L11.8 7.8L8 6.5L11.8 5.5L10 2L13.8 3.5Z" fill="#f6c860"/></g></svg>
<svg style="left:1180px;top:110px;" width="22" height="22" viewBox="0 0 22 22"><path d="M1.3 8.7H11.7V17.3H1.3Z" fill="#69707c" stroke="#d0d0d0" stroke-width="1.2"/><circle cx="13" cy="17" r="3.6" fill="#69707c" fill-opacity="0.85" stroke="#d0d0d0" stroke-width="1.1"/><rect x="0" y="16" width="2.5" height="2.5" fill="#f0f0f0"/><g transform="translate(2,1.5) scale(0.85)"><path d="M10 11L17 2.5L20 5L13 13.5L9.5 14.5Z" fill="#f2b84c"/><path d="M17 2.5L18.5 0.8L21.5 3L20 5Z" fill="#f05a5a"/></g></svg>
<svg style="left:1180px;top:141px;" width="22" height="22" viewBox="0 0 22 22"><path d="M2 2H10L19 11L10 21L1 12Z" fill="#d0d0d0" transform="rotate(-8 10 11)"/><circle cx="5" cy="7" r="1.5" fill="#3b4453"/><path d="M7 12L10 14.5L14 9" stroke="#3b4453" stroke-width="1.2" fill="none"/><g transform="translate(1,-1)"><path d="M10 11L17 2.5L20 5L13 13.5L9.5 14.5Z" fill="#f2b84c"/><path d="M17 2.5L18.5 0.8L21.5 3L20 5Z" fill="#f05a5a"/></g></svg>
<svg style="left:1211px;top:149px;" width="7" height="4" viewBox="0 0 7 4"><path d="M0 0H7L3.5 4Z" fill="#d8d8d8"/></svg>
<svg style="left:1244px;top:77px;" width="44" height="44" viewBox="0 0 44 44"><path d="M1 1H25V35H1Z" fill="#d9d9d9"/><path d="M4 4H22V16H4Z" fill="#74c0f6"/><path d="M5 22H20M5 29H20" stroke="#8a8a8a" stroke-width="1"/><path d="M8.5 20V24M17 27V31" stroke="#666" stroke-width="1.5"/><g transform="translate(27.2,34) rotate(-45)"><path d="M-3.6 -7.3H3.3V7.3H-3.6Z" fill="#f2cb6c" stroke="#3b4453" stroke-width="0.7"/><path d="M3.3 -7.3H8.6V7.3H3.3Z" fill="#f4f4f4"/><path d="M8.6 -2H13.5V2H8.6Z" fill="#f4f4f4"/></g></svg>
<div class="t" style="left:1242.21px;top:122.68px;letter-spacing:0.737px;">Match</div>
<div class="t" style="left:1229.11px;top:141.98px;letter-spacing:0.237px;">Properties</div>
<svg style="left:1304px;top:80px;" width="20" height="20" viewBox="0 0 20 20"><path d="M10 10L10.00 0.00A10 10 0 0 1 18.66 5.00Z" fill="#f2c744"/><path d="M10 10L18.66 5.00A10 10 0 0 1 18.66 15.00Z" fill="#f08a3c"/><path d="M10 10L18.66 15.00A10 10 0 0 1 10.00 20.00Z" fill="#e8484c"/><path d="M10 10L10.00 20.00A10 10 0 0 1 1.34 15.00Z" fill="#a05ad8"/><path d="M10 10L1.34 15.00A10 10 0 0 1 1.34 5.00Z" fill="#4a8cf0"/><path d="M10 10L1.34 5.00A10 10 0 0 1 10.00 0.00Z" fill="#38c0a0"/></svg>
<svg style="left:1304px;top:111px;" width="21" height="20" viewBox="0 0 21 20"><path d="M0 1.5H20M0 2.5H20" stroke="#dcdcdc" stroke-width="1"/><path d="M0 6H20V10H0ZM0 13.5H20V19.5H0Z" fill="#dcdcdc"/><path d="M0 1H20V3H0Z" fill="#dcdcdc"/></svg>
<svg style="left:1304px;top:143px;" width="21" height="17" viewBox="0 0 21 17"><g stroke="#c8c8c8" stroke-width="1.1"><path d="M0 1H20" stroke-dasharray="2.5 1.5"/><path d="M0 4.5H20" stroke-dasharray="1 1"/><path d="M0 8H20" stroke-dasharray="5 1.5"/><path d="M0 11.5H20" stroke-dasharray="3 1 1 1"/><path d="M0 15H20"/></g></svg>
<div style="left:1327.5px;top:76.5px;width:168.5px;height:25.5px;background:#4d596e;border:1px solid #2a303b"></div>
<div style="left:1327.5px;top:107.5px;width:168.5px;height:25.5px;background:#4d596e;border:1px solid #2a303b"></div>
<div style="left:1327.5px;top:138.5px;width:168.5px;height:25.5px;background:#4d596e;border:1px solid #2a303b"></div>
<div style="left:1336px;top:80.5px;width:18.5px;height:17.5px;background:#ff8000;border:1px solid #d8d8d8"></div>
<div class="t" style="left:1360.31px;top:80.68px;letter-spacing:-0.277px;">ByLayer</div>
<svg style="left:1486px;top:87.5px;" width="10" height="5.5" viewBox="0 0 10 5.5"><path d="M0 0H10L5.0 5.5Z" fill="#d8d8d8"/></svg>
<div style="left:1336px;top:120px;width:80px;height:1.3px;background:#e8e8e8;"></div>
<div class="t" style="left:1417.31px;top:111.78px;letter-spacing:-0.210px;">ByLayer</div>
<svg style="left:1485px;top:118.5px;" width="10" height="5.5" viewBox="0 0 10 5.5"><path d="M0 0H10L5.0 5.5Z" fill="#d8d8d8"/></svg>
<div style="left:1336px;top:151px;width:80px;height:1.3px;background:#e8e8e8;"></div>
<div class="t" style="left:1417.31px;top:142.48px;letter-spacing:-0.210px;">ByLayer</div>
<svg style="left:1485px;top:149.5px;" width="10" height="5.5" viewBox="0 0 10 5.5"><path d="M0 0H10L5.0 5.5Z" fill="#d8d8d8"/></svg>
<svg style="left:1508px;top:78px;" width="40" height="41" viewBox="0 0 40 41"><path d="M6 7.5H2V39.5H6M24 36V39.5H28V28" stroke="#d0d0d0" stroke-width="1.4" fill="none"/><path d="M8.5 12.5H20.5V21H8.5Z" fill="#3d6f9c" stroke="#6cb8f0" stroke-width="1.3"/><circle cx="14.5" cy="31" r="6.2" fill="#6f747c" stroke="#cfcfcf" stroke-width="1.2"/><g transform="translate(7.4,1.4) scale(1.45)"><path d="M15 0L16.3 3.5L20 2L18.3 5.5L22 6.5L18.3 7.8L20 11L16.3 9.5L15 13L13.8 9.5L10 11L11.8 7.8L8 6.5L11.8 5.5L10 2L13.8 3.5Z" fill="#f6c860"/></g></svg>
<div class="t" style="left:1506.77px;top:122.28px;letter-spacing:0.310px;">Group</div>
<svg style="left:1556px;top:80px;" width="22" height="21" viewBox="0 0 22 21"><path d="M14 1H17V19H14" stroke="#d0d0d0" stroke-width="1.2" fill="none"/><path d="M1.5 3.5H9V9H1.5Z" fill="#3d6f9c" stroke="#6cb8f0" stroke-width="1.1"/><circle cx="5.2" cy="15" r="3.3" fill="#6f747c" stroke="#cfcfcf" stroke-width="1.1"/><path d="M13 8L20 15M20 8L13 15" stroke="#f0404c" stroke-width="2"/></svg>
<svg style="left:1556px;top:111px;" width="22" height="21" viewBox="0 0 22 21"><path d="M4.5 1H1.5V19H4.5M11 1H14V19H11" stroke="#d0d0d0" stroke-width="1.2" fill="none"/><path d="M4.5 3.5H11V8.5H4.5Z" fill="#3d6f9c" stroke="#6cb8f0" stroke-width="1.1"/><circle cx="7.7" cy="14" r="3" fill="#6f747c" stroke="#cfcfcf" stroke-width="1.1"/><g transform="translate(4,6) scale(0.8)"><path d="M10 11L17 2.5L20 5L13 13.5L9.5 14.5Z" fill="#f2b84c"/><path d="M17 2.5L18.5 0.8L21.5 3L20 5Z" fill="#f05a5a"/></g></svg>
<div style="left:1553px;top:138px;width:28px;height:26px;background:#435875;border:1px solid #5cb2ee"></div>
<svg style="left:1557px;top:142px;" width="22" height="21" viewBox="0 0 22 21"><path d="M4.5 1H1.5V19H4.5M11 1H14V19H11" stroke="#d0d0d0" stroke-width="1.2" fill="none"/><path d="M4.5 3.5H11V8.5H4.5Z" fill="#2f7f4f" stroke="#58c878" stroke-width="1.1"/><circle cx="7.7" cy="14" r="3" fill="#2f7f4f" stroke="#58c878" stroke-width="1.1"/><g transform="translate(10,7)"><path d="M0 0V11L2.8 8.5L4.8 13L6.8 12L4.8 7.8H8.5Z" fill="#f4f4f4" stroke="#3b4453" stroke-width="0.6"/></g></svg>
<svg style="left:1612px;top:93.5px;" width="38" height="10" viewBox="0 0 38 10"><path d="M0.5 0.5H36.5V8.2H0.5Z" fill="#f6cd6a"/><path d="M4 0.5V4M8 0.5V3M12 0.5V4M16 0.5V3M20 0.5V4M24 0.5V3M28 0.5V4M32 0.5V3" stroke="#a87818" stroke-width="1"/></svg>
<div class="t" style="left:1602.21px;top:123.68px;letter-spacing:0.137px;">Measure</div>
<svg style="left:1627.5px;top:146.5px;" width="8" height="4.5" viewBox="0 0 8 4.5"><path d="M0 0H8L4.0 4.5Z" fill="#d8d8d8"/></svg>
<svg style="left:1677px;top:80px;" width="22" height="21" viewBox="0 0 22 21"><path d="M8 0L3.5 6H7L5 10.5L11.5 4H8L10.5 0Z" fill="#f6c244"/><path d="M8.5 7.5H21V19.5H8.5Z" fill="#eef4fc"/><path d="M11 11H12.5M14 11H19M11 14H12.5M14 14H19M11 17H12.5M14 17H19" stroke="#3a8ee0" stroke-width="1.3"/><g transform="translate(0.5,7)"><path d="M0 0V11L2.8 8.5L4.8 13L6.8 12L4.8 7.8H8.5Z" fill="#f4f4f4" stroke="#3b4453" stroke-width="0.6"/></g></svg>
<svg style="left:1677px;top:111px;" width="22" height="22" viewBox="0 0 22 22"><path d="M1 1H18V17H1Z" fill="#2f7f4f" stroke="#58c878" stroke-width="1.2" stroke-dasharray="2.2 1.2"/><path d="M6 4H16V13H6Z" fill="#62cf8c"/><path d="M3 7H11V15H3Z" fill="#62cf8c" stroke="#2f7f4f" stroke-width="1"/><g transform="translate(12.5,9)"><path d="M0 0V11L2.8 8.5L4.8 13L6.8 12L4.8 7.8H8.5Z" fill="#f4f4f4" stroke="#3b4453" stroke-width="0.6"/></g></svg>
<svg style="left:1680px;top:142px;" width="16" height="21" viewBox="0 0 16 21"><path d="M0.5 0.5H15.5V20.5H0.5Z" fill="#c9c9c9"/><path d="M3 3H13V7H3Z" fill="#777"/><path d="M3 9.5H5.5V12H3ZM6.8 9.5H9.3V12H6.8ZM10.5 9.5H13V12H10.5ZM3 13.5H5.5V16H3ZM6.8 13.5H9.3V16H6.8ZM10.5 13.5H13V16H10.5ZM3 17H5.5V19H3ZM6.8 17H9.3V19H6.8ZM10.5 17H13V19H10.5Z" fill="#666"/></svg>
<svg style="left:1724px;top:78px;" width="34" height="42" viewBox="0 0 34 42"><path d="M1 5H28V36H1Z" fill="#d9a868"/><path d="M9.5 3.5C9.5 0.5 19.5 0.5 19.5 3.5H22V7H7V3.5Z" fill="#f2f2f2"/><path d="M10 13H24L33 22V41H10Z" fill="#dcdcdc"/><path d="M24 13V22H33Z" fill="#f6f6f6" stroke="#bbb" stroke-width="0.5"/></svg>
<div class="t" style="left:1723.14px;top:124.38px;letter-spacing:-0.300px;transform:scaleX(0.9781);transform-origin:left center;">Paste</div>
<svg style="left:1737px;top:147.5px;" width="8" height="4.5" viewBox="0 0 8 4.5"><path d="M0 0H8L4.0 4.5Z" fill="#d8d8d8"/></svg>
<svg style="left:1777px;top:80px;" width="22" height="21" viewBox="0 0 22 21"><path d="M0.5 0.5H15V17H0.5Z" fill="#cfcfcf"/><path d="M3 4H12.5M3 7.5H12.5M3 11H9" stroke="#8a8a8a" stroke-width="1"/><path d="M9.5 6.5L17.5 16M19.5 6.5L11.5 16" stroke="#f4f4f4" stroke-width="1.9"/><circle cx="11" cy="18" r="2" stroke="#f4f4f4" stroke-width="1.2" fill="none"/><circle cx="18" cy="18" r="2" stroke="#f4f4f4" stroke-width="1.2" fill="none"/></svg>
<svg style="left:1804px;top:88px;" width="7" height="4" viewBox="0 0 7 4"><path d="M0 0H7L3.5 4Z" fill="#d8d8d8"/></svg>
<svg style="left:1778px;top:111px;" width="18" height="21" viewBox="0 0 18 21"><path d="M1 0.5H8L11 3.5V15H1Z" fill="#cfcfcf" stroke="#3b4453" stroke-width="0.8"/><path d="M6 5H13L17 9V20.5H6Z" fill="#dcdcdc" stroke="#3b4453" stroke-width="0.8"/></svg>
<svg style="left:1804px;top:119px;" width="7" height="4" viewBox="0 0 7 4"><path d="M0 0H7L3.5 4Z" fill="#d8d8d8"/></svg>
<svg style="left:1840px;top:82px;" width="41" height="32" viewBox="0 0 41 32"><path d="M0 0.5H17V13.5H40.5V31H0Z" fill="#dcdcdc"/></svg>
<div class="t" style="left:1843.52px;top:123.68px;letter-spacing:-0.300px;transform:scaleX(0.9929);transform-origin:left center;">Base</div>
<svg style="left:1856px;top:146px;" width="8" height="4.5" viewBox="0 0 8 4.5"><path d="M0 0H8L4.0 4.5Z" fill="#d8d8d8"/></svg>
<div style="left:6px;top:194px;width:1909px;height:33px;background:#222933;"></div>
<div style="left:25px;top:204.3px;width:20px;height:2.2px;background:#e4e4e4;"></div>
<div style="left:25px;top:211.10000000000002px;width:20px;height:2.2px;background:#e4e4e4;"></div>
<div style="left:25px;top:217.9px;width:20px;height:2.2px;background:#e4e4e4;"></div>
<svg style="left:58px;top:202.5px;" width="10" height="19" viewBox="0 0 10 19"><path d="M9 0.5L1 18.5" stroke="#596273" stroke-width="1.1"/></svg>
<div class="t" style="left:76.32px;top:202.80px;font-size:15px;color:#e8e8e8;letter-spacing:0.029px;">Start</div>
<svg style="left:115px;top:196px;" width="212" height="31" viewBox="0 0 212 31"><path d="M3 31L15 1H209L197.5 31Z" fill="#3b4453"/></svg>
<div class="t" style="left:137.98px;top:202.80px;font-size:15px;color:#ffffff;letter-spacing:-0.107px;font-weight:bold;">2figurasgeometricas*</div>
<svg style="left:300px;top:207.5px;" width="11" height="10" viewBox="0 0 11 10"><path d="M1 1L10 9M10 1L1 9" stroke="#b4b4b4" stroke-width="2.2"/></svg>
<svg style="left:337px;top:203px;" width="18" height="18" viewBox="0 0 18 18"><path d="M9 0V18M0 9H18" stroke="#e4e4e4" stroke-width="2"/></svg>
<svg style="left:367px;top:202.5px;" width="10" height="19" viewBox="0 0 10 19"><path d="M9 0.5L1 18.5" stroke="#596273" stroke-width="1.1"/></svg>
<div style="left:5.5px;top:235px;width:192px;height:27px;background:#2e3542;border-radius:5px 5px 0 0"></div>
<svg style="left:13px;top:243px;" width="4" height="11" viewBox="0 0 4 11"><path d="M0.5 0V11M2.8 0V11" stroke="#9aa0aa" stroke-width="1" stroke-dasharray="1 1"/></svg>
<div class="t" style="left:22.94px;top:237.78px;color:#f4f4f4;letter-spacing:-0.300px;transform:scaleX(0.8945);transform-origin:left center;">PROPERTIES</div>
<div style="left:27.5px;top:277.5px;width:67.5px;height:26.5px;background:#4a566a;border:1px solid #2a303b"></div>
<div class="t" style="left:30.31px;top:282.18px;letter-spacing:0.519px;">No s...</div>
<svg style="left:83px;top:289px;" width="9" height="5" viewBox="0 0 9 5"><path d="M0 0H9L4.5 5Z" fill="#d8d8d8"/></svg>
<svg style="left:106px;top:282px;" width="22" height="21" viewBox="0 0 22 21"><path d="M0.5 4.5H11.5V13.5H0.5Z" fill="#6cb8f0"/><path d="M6.5 10.5H17.5V20.5H6.5Z" fill="#8cc8f6" stroke="#3b4453" stroke-width="0.8"/><path d="M16.5 0V9M12 4.5H21" stroke="#58c878" stroke-width="2.4"/></svg>
<svg style="left:135px;top:282px;" width="22" height="21" viewBox="0 0 22 21"><path d="M1 1H16V14H1Z" fill="#5fbf86" stroke="#7fe0a4" stroke-width="1.2" stroke-dasharray="2.2 1.2"/><g transform="translate(12,8)"><path d="M0 0V11L2.8 8.5L4.8 13L6.8 12L4.8 7.8H8.5Z" fill="#f4f4f4" stroke="#3b4453" stroke-width="0.6"/></g></svg>
<svg style="left:164px;top:281px;" width="22" height="22" viewBox="0 0 22 22"><path d="M8 0L3.5 6H7L5 10.5L11.5 4H8L10.5 0Z" fill="#f6c244"/><path d="M8.5 7.5H21V19.5H8.5Z" fill="#eef4fc"/><path d="M11 11H12.5M14 11H19M11 14H12.5M14 14H19M11 17H12.5M14 17H19" stroke="#3a8ee0" stroke-width="1.3"/><g transform="translate(0.5,7)"><path d="M0 0V11L2.8 8.5L4.8 13L6.8 12L4.8 7.8H8.5Z" fill="#f4f4f4" stroke="#3b4453" stroke-width="0.6"/></g></svg>
<div style="left:27.8px;top:311px;width:156.2px;height:26.3px;background:#2b313c;"></div>
<div class="t" style="left:35.01px;top:314.68px;color:#ffffff;letter-spacing:0.237px;font-weight:bold;">General</div>
<svg style="left:164px;top:321px;" width="10.5" height="5.5" viewBox="0 0 10.5 5.5"><path d="M0 0H10.5L5.25 5.5Z" fill="#e4e4e4"/></svg>
<div style="left:47.5px;top:338px;width:136.5px;height:26.1px;background:#3b4453;box-shadow:inset 0 -1px 0 #2e3440,inset 1px 0 0 #2e3440,inset -1px 0 0 #2e3440"></div>
<div style="left:103px;top:338px;width:1px;height:26.1px;background:#2e3440;"></div>
<div class="t" style="left:56.26px;top:341.18px;color:#e2e4e8;letter-spacing:0.407px;">Color</div>
<div style="left:107px;top:341.2px;width:16px;height:16px;background:#ff8000;border:1px solid #d8d8d8"></div>
<div class="t" style="left:131.81px;top:341.18px;color:#f2f2f2;letter-spacing:-0.053px;">ByLa...</div>
<div style="left:47.5px;top:364.1px;width:136.5px;height:26.1px;background:#3b4453;box-shadow:inset 0 -1px 0 #2e3440,inset 1px 0 0 #2e3440,inset -1px 0 0 #2e3440"></div>
<div style="left:103px;top:364.1px;width:1px;height:26.1px;background:#2e3440;"></div>
<div class="t" style="left:55.81px;top:367.28px;color:#e2e4e8;letter-spacing:0.240px;">Layer</div>
<div class="t" style="left:107.77px;top:367.28px;color:#f2f2f2;letter-spacing:-0.238px;">Janelas</div>
<div style="left:47.5px;top:390.2px;width:136.5px;height:26.1px;background:#3b4453;box-shadow:inset 0 -1px 0 #2e3440,inset 1px 0 0 #2e3440,inset -1px 0 0 #2e3440"></div>
<div style="left:103px;top:390.2px;width:1px;height:26.1px;background:#2e3440;"></div>
<div class="t" style="left:55.81px;top:393.38px;color:#e2e4e8;letter-spacing:0.219px;">Line...</div>
<div style="left:108.4px;top:402.8px;width:32.2px;height:1.3px;background:#e8e8e8;"></div>
<div class="t" style="left:145.81px;top:393.38px;color:#f2f2f2;letter-spacing:0.471px;">By...</div>
<div style="left:47.5px;top:416.3px;width:136.5px;height:26.1px;background:#3b4453;box-shadow:inset 0 -1px 0 #2e3440,inset 1px 0 0 #2e3440,inset -1px 0 0 #2e3440"></div>
<div style="left:103px;top:416.3px;width:1px;height:26.1px;background:#2e3440;"></div>
<div class="t" style="left:55.81px;top:419.48px;color:#e2e4e8;letter-spacing:0.219px;">Line...</div>
<div class="t" style="left:106.90px;top:419.48px;color:#f2f2f2;letter-spacing:0.024px;">1.0000</div>
<div style="left:47.5px;top:442.4px;width:136.5px;height:26.1px;background:#3b4453;box-shadow:inset 0 -1px 0 #2e3440,inset 1px 0 0 #2e3440,inset -1px 0 0 #2e3440"></div>
<div style="left:103px;top:442.4px;width:1px;height:26.1px;background:#2e3440;"></div>
<div class="t" style="left:55.81px;top:445.58px;color:#e2e4e8;letter-spacing:0.219px;">Line...</div>
<div style="left:108.4px;top:455.0px;width:32.2px;height:1.3px;background:#e8e8e8;"></div>
<div class="t" style="left:145.81px;top:445.58px;color:#f2f2f2;letter-spacing:0.471px;">By...</div>
<div style="left:47.5px;top:468.5px;width:136.5px;height:26.1px;background:#3b4453;box-shadow:inset 0 -1px 0 #2e3440,inset 1px 0 0 #2e3440,inset -1px 0 0 #2e3440"></div>
<div style="left:103px;top:468.5px;width:1px;height:26.1px;background:#2e3440;"></div>
<div class="t" style="left:56.67px;top:471.68px;color:#e2e4e8;letter-spacing:-0.069px;">Tran...</div>
<div class="t" style="left:106.81px;top:471.68px;color:#f2f2f2;letter-spacing:-0.244px;">ByLayer</div>
<div style="left:47.5px;top:494.6px;width:136.5px;height:26.1px;background:#3b4453;box-shadow:inset 0 -1px 0 #2e3440,inset 1px 0 0 #2e3440,inset -1px 0 0 #2e3440"></div>
<div style="left:103px;top:494.6px;width:1px;height:26.1px;background:#2e3440;"></div>
<div class="t" style="left:56.67px;top:497.78px;color:#e2e4e8;letter-spacing:0.079px;">Thic...</div>
<div class="t" style="left:107.43px;top:497.78px;color:#f2f2f2;letter-spacing:-0.083px;">0.0000</div>
<div style="left:27.8px;top:524.7px;width:156.2px;height:26.3px;background:#2b313c;"></div>
<div class="t" style="left:35.27px;top:528.38px;color:#ffffff;letter-spacing:0.180px;font-weight:bold;">3D Visualization</div>
<svg style="left:164px;top:534.7px;" width="10.5" height="5.5" viewBox="0 0 10.5 5.5"><path d="M0 0H10.5L5.25 5.5Z" fill="#e4e4e4"/></svg>
<div style="left:47.5px;top:551px;width:136.5px;height:26.1px;background:#3b4453;box-shadow:inset 0 -1px 0 #2e3440,inset 1px 0 0 #2e3440,inset -1px 0 0 #2e3440"></div>
<div style="left:103px;top:551px;width:1px;height:26.1px;background:#2e3440;"></div>
<div class="t" style="left:55.81px;top:554.18px;color:#e2e4e8;letter-spacing:1.112px;">Mat...</div>
<div class="t" style="left:106.81px;top:554.18px;color:#f2f2f2;letter-spacing:-0.244px;">ByLayer</div>
<div style="left:27.8px;top:581.3px;width:156.2px;height:26.3px;background:#2b313c;"></div>
<div class="t" style="left:34.63px;top:584.98px;color:#ffffff;letter-spacing:0.203px;font-weight:bold;">Layout</div>
<svg style="left:164px;top:591.3px;" width="10.5" height="5.5" viewBox="0 0 10.5 5.5"><path d="M0 0H10.5L5.25 5.5Z" fill="#e4e4e4"/></svg>
<div style="left:47.5px;top:607.7px;width:136.5px;height:26.1px;background:#3b4453;box-shadow:inset 0 -1px 0 #2e3440,inset 1px 0 0 #2e3440,inset -1px 0 0 #2e3440"></div>
<div style="left:103px;top:607.7px;width:1px;height:26.1px;background:#2e3440;"></div>
<div class="t" style="left:55.81px;top:610.88px;color:#e2e4e8;letter-spacing:0.131px;">Layo...</div>
<div class="t" style="left:106.81px;top:610.88px;color:#f2f2f2;letter-spacing:0.183px;">Layout1</div>
<div style="left:47.5px;top:633.8px;width:136.5px;height:26.1px;background:#3b4453;box-shadow:inset 0 -1px 0 #2e3440,inset 1px 0 0 #2e3440,inset -1px 0 0 #2e3440"></div>
<div style="left:103px;top:633.8px;width:1px;height:26.1px;background:#2e3440;"></div>
<div class="t" style="left:55.81px;top:636.98px;color:#e2e4e8;letter-spacing:0.786px;">Pag...</div>
<div class="t" style="left:107.28px;top:636.98px;color:#9aa2ae;letter-spacing:0.825px;">&lt;None&gt;</div>
<div style="left:47.5px;top:659.9px;width:136.5px;height:26.1px;background:#3b4453;box-shadow:inset 0 -1px 0 #2e3440,inset 1px 0 0 #2e3440,inset -1px 0 0 #2e3440"></div>
<div style="left:103px;top:659.9px;width:1px;height:26.1px;background:#2e3440;"></div>
<div class="t" style="left:55.81px;top:663.08px;color:#e2e4e8;letter-spacing:0.311px;">DPI...</div>
<div class="t" style="left:107.45px;top:663.08px;color:#f2f2f2;letter-spacing:0.363px;">300</div>
<div style="left:27.8px;top:690.2px;width:156.2px;height:26.3px;background:#2b313c;"></div>
<div class="t" style="left:34.63px;top:693.88px;color:#ffffff;letter-spacing:0.211px;font-weight:bold;">Plot style</div>
<svg style="left:164px;top:700.2px;" width="10.5" height="5.5" viewBox="0 0 10.5 5.5"><path d="M0 0H10.5L5.25 5.5Z" fill="#e4e4e4"/></svg>
<div style="left:47.5px;top:716.5px;width:136.5px;height:26.1px;background:#3b4453;box-shadow:inset 0 -1px 0 #2e3440,inset 1px 0 0 #2e3440,inset -1px 0 0 #2e3440"></div>
<div style="left:103px;top:716.5px;width:1px;height:26.1px;background:#2e3440;"></div>
<div class="t" style="left:55.81px;top:719.68px;color:#e2e4e8;letter-spacing:0.457px;">Plot...</div>
<div class="t" style="left:106.81px;top:719.68px;color:#9aa2ae;letter-spacing:0.276px;">ByColor</div>
<div style="left:47.5px;top:742.6px;width:136.5px;height:26.1px;background:#3b4453;box-shadow:inset 0 -1px 0 #2e3440,inset 1px 0 0 #2e3440,inset -1px 0 0 #2e3440"></div>
<div style="left:103px;top:742.6px;width:1px;height:26.1px;background:#2e3440;"></div>
<div class="t" style="left:55.81px;top:745.78px;color:#e2e4e8;letter-spacing:0.457px;">Plot...</div>
<div class="t" style="left:106.81px;top:745.78px;color:#f2f2f2;letter-spacing:1.157px;">None</div>
<div style="left:47.5px;top:768.7px;width:136.5px;height:26.1px;background:#3b4453;box-shadow:inset 0 -1px 0 #2e3440,inset 1px 0 0 #2e3440,inset -1px 0 0 #2e3440"></div>
<div style="left:103px;top:768.7px;width:1px;height:26.1px;background:#2e3440;"></div>
<div class="t" style="left:55.81px;top:771.88px;color:#e2e4e8;letter-spacing:0.457px;">Plot...</div>
<div class="t" style="left:106.81px;top:771.88px;color:#9aa2ae;letter-spacing:0.183px;">Layout1</div>
<div style="left:47.5px;top:794.8px;width:136.5px;height:26.1px;background:#3b4453;box-shadow:inset 0 -1px 0 #2e3440,inset 1px 0 0 #2e3440,inset -1px 0 0 #2e3440"></div>
<div style="left:103px;top:794.8px;width:1px;height:26.1px;background:#2e3440;"></div>
<div class="t" style="left:55.81px;top:797.98px;color:#e2e4e8;letter-spacing:0.457px;">Plot...</div>
<div class="t" style="left:106.81px;top:797.98px;color:#9aa2ae;letter-spacing:0.256px;">Not avail...</div>
<div style="left:27.8px;top:825.3px;width:156.2px;height:26.3px;background:#2b313c;"></div>
<div class="t" style="left:35.50px;top:828.98px;color:#ffffff;letter-spacing:0.230px;font-weight:bold;">View</div>
<svg style="left:164px;top:835.3px;" width="10.5" height="5.5" viewBox="0 0 10.5 5.5"><path d="M0 0H10.5L5.25 5.5Z" fill="#e4e4e4"/></svg>
<div style="left:47.5px;top:851.6px;width:136.5px;height:26.1px;background:#3b4453;box-shadow:inset 0 -1px 0 #2e3440,inset 1px 0 0 #2e3440,inset -1px 0 0 #2e3440"></div>
<div style="left:103px;top:851.6px;width:1px;height:26.1px;background:#2e3440;"></div>
<div class="t" style="left:56.26px;top:854.78px;color:#e2e4e8;letter-spacing:0.191px;">Cent...</div>
<div class="t" style="left:107.43px;top:854.78px;color:#9aa2ae;letter-spacing:-0.051px;">0.3507</div>
<div style="left:47.5px;top:877.7px;width:136.5px;height:26.1px;background:#3b4453;box-shadow:inset 0 -1px 0 #2e3440,inset 1px 0 0 #2e3440,inset -1px 0 0 #2e3440"></div>
<div style="left:103px;top:877.7px;width:1px;height:26.1px;background:#2e3440;"></div>
<div class="t" style="left:56.26px;top:880.88px;color:#e2e4e8;letter-spacing:0.191px;">Cent...</div>
<div class="t" style="left:107.43px;top:880.88px;color:#9aa2ae;letter-spacing:-0.051px;">0.4632</div>
<div style="left:47.5px;top:903.8px;width:136.5px;height:26.1px;background:#3b4453;box-shadow:inset 0 -1px 0 #2e3440,inset 1px 0 0 #2e3440,inset -1px 0 0 #2e3440"></div>
<div style="left:103px;top:903.8px;width:1px;height:26.1px;background:#2e3440;"></div>
<div class="t" style="left:56.26px;top:906.98px;color:#e2e4e8;letter-spacing:0.191px;">Cent...</div>
<div class="t" style="left:107.43px;top:906.98px;color:#9aa2ae;letter-spacing:-0.083px;">0.0000</div>
<div style="left:47.5px;top:929.9px;width:136.5px;height:26.1px;background:#3b4453;box-shadow:inset 0 -1px 0 #2e3440,inset 1px 0 0 #2e3440,inset -1px 0 0 #2e3440"></div>
<div style="left:103px;top:929.9px;width:1px;height:26.1px;background:#2e3440;"></div>
<div class="t" style="left:55.81px;top:933.08px;color:#e2e4e8;letter-spacing:0.401px;">Heig...</div>
<div class="t" style="left:106.90px;top:933.08px;color:#9aa2ae;letter-spacing:0.039px;">1.9396</div>
<div style="left:47.5px;top:956px;width:136.5px;height:26.1px;background:#3b4453;box-shadow:inset 0 -1px 0 #2e3440,inset 1px 0 0 #2e3440,inset -1px 0 0 #2e3440"></div>
<div style="left:103px;top:956px;width:1px;height:26.1px;background:#2e3440;"></div>
<div class="t" style="left:56.94px;top:959.18px;color:#e2e4e8;letter-spacing:1.185px;">Width</div>
<div class="t" style="left:107.27px;top:959.18px;color:#9aa2ae;letter-spacing:-0.018px;">2.5812</div>
<div style="left:27.8px;top:986px;width:156.2px;height:26.3px;background:#2b313c;"></div>
<div class="t" style="left:34.63px;top:989.68px;color:#ffffff;letter-spacing:0.520px;font-weight:bold;">Misc</div>
<svg style="left:164px;top:996px;" width="10.5" height="5.5" viewBox="0 0 10.5 5.5"><path d="M0 0H10.5L5.25 5.5Z" fill="#e4e4e4"/></svg>
<div style="left:449.4px;top:337.4px;width:658.8px;height:464.6px;background:#ffffff;border-left:1px solid #6e6e6e;border-top:1px solid #6e6e6e;box-shadow:2.5px 2.5px 4px rgba(0,0,0,0.32)"></div>
<svg style="left:450px;top:340px;" width="660" height="462" viewBox="0 0 660 462"><path fill-rule="evenodd" fill="#606060" d="M5.3 3.3H653.9V457.8H5.3ZM9.9 7.1V453.9H649.2V7.1Z"/></svg>
<svg style="left:390px;top:355px;" width="392" height="316" viewBox="0 0 392 316"><rect x="7.5" y="5.7" width="378" height="304" fill="none" stroke="#ff8000" stroke-width="3"/></svg>
<div class="t" style="left:399.77px;top:366.58px;color:#1c1c1c;letter-spacing:0.601px;">[+][Top][2D Wireframe]</div>
<div style="left:530.6px;top:427.9px;width:156.6px;height:155.8px;border:1px solid #ff0000"></div>
<div style="left:530.6px;top:523.3px;width:1.1px;height:63px;background:#000;"></div>
<div style="left:530.6px;top:585.1px;width:63.2px;height:1.4px;background:#000;"></div>
<div style="left:526.2px;top:580px;width:9.6px;height:9.6px;border:1px solid #000"></div>
<svg style="left:532.4px;top:503.5px;" width="17" height="17" viewBox="0 0 17 17"><path d="M1 1L8.5 8.5L16 1M8.5 8.5V16" stroke="#111" stroke-width="1.1" fill="none"/></svg>
<svg style="left:597.3px;top:569.6px;" width="17" height="16" viewBox="0 0 17 16"><path d="M1 1L16 15M16 1L1 15" stroke="#111" stroke-width="1.1"/></svg>
<div style="left:713px;top:372px;width:50px;height:50px;border-radius:50%;background:#fcfcfe"></div>
<div style="left:727.1px;top:386.2px;width:19.8px;height:19.6px;background:#e6e8ea;border:1px solid #666"></div>
<div class="t" style="left:732.28px;top:387.59px;font-size:5.5px;color:#9a9ea4;">TOP</div>
<div class="t" style="left:735.11px;top:364.23px;font-size:8px;color:#c6c8d0;font-weight:bold;">N</div>
<div class="t" style="left:735.37px;top:410.73px;font-size:8px;color:#c6c8d0;font-weight:bold;">S</div>
<div class="t" style="left:710.22px;top:387.73px;font-size:8px;color:#c6c8d0;font-weight:bold;">W</div>
<div class="t" style="left:759.22px;top:387.73px;font-size:8px;color:#c6c8d0;font-weight:bold;">E</div>
<div style="left:710px;top:434px;width:56px;height:19.5px;background:#ececf4;border-radius:5px"></div>
<div class="t" style="left:714.49px;top:434.17px;font-size:12.5px;color:#c2c4cc;letter-spacing:0.169px;font-weight:bold;">WCS</div>
<svg style="left:748px;top:439px;" width="11" height="8" viewBox="0 0 11 8"><path d="M0.7 0.7H10.3L5.5 7Z" fill="none" stroke="#c2c4cc" stroke-width="1.2"/></svg>
<svg style="left:1273px;top:248px;" width="18" height="9" viewBox="0 0 18 9"><path d="M1 1.5H16V6.5H1Z" fill="#f0f0f0" stroke="#555" stroke-width="1.2"/></svg>
<svg style="left:1298px;top:241px;" width="17" height="17" viewBox="0 0 17 17"><path d="M5 1H15V11H12V4.5H5Z" fill="#f0f0f0" stroke="#555" stroke-width="1"/><path d="M1.5 5H11.5V15.5H1.5Z" fill="#f0f0f0" stroke="#555" stroke-width="1"/><path d="M4.5 8.5H8.5V12.5H4.5Z" fill="#8b8b8b" stroke="#555" stroke-width="0.8"/></svg>
<svg style="left:1323px;top:243px;" width="16" height="13" viewBox="0 0 16 13"><path d="M1.5 1.5H5.5L8 4.2L10.5 1.5H14.5L10.2 6.5L14.5 11.5H10.5L8 8.8L5.5 11.5H1.5L5.8 6.5Z" fill="#f0f0f0" stroke="#555" stroke-width="1"/></svg>
<div style="left:435.3px;top:932.2px;width:31px;height:101.2px;background:#464e5d;border-radius:3px 0 0 3px"></div>
<svg style="left:440px;top:938px;" width="22" height="5" viewBox="0 0 22 5"><path d="M0 1H22M0 4H22" stroke="#eaeaea" stroke-width="1.3" stroke-dasharray="1.5 1.55"/></svg>
<svg style="left:442px;top:954px;" width="13" height="12" viewBox="0 0 13 12"><path d="M1.5 1.5L11.5 10.5M11.5 1.5L1.5 10.5" stroke="#d8d8d8" stroke-width="2.2"/></svg>
<svg style="left:440px;top:980px;" width="19" height="20" viewBox="0 0 19 20"><path d="M2 17.5L10.5 9" stroke="#d0d0d0" stroke-width="3" stroke-linecap="round"/><path d="M17.8 3.2L14 6.5L12 4.8L15.5 1.2C11.5 0 8.5 3.5 10 7.5L12.5 9.5C16 10.5 19 7.5 17.8 3.2Z" fill="#d0d0d0"/></svg>
<div style="left:466px;top:932.2px;width:649px;height:75px;background:#b9b9b9;border:1px solid #6a6a6a"></div>
<div class="t" style="left:468.82px;top:951.00px;font-size:15px;color:#2e2e2e;letter-spacing:0.075px;font-family:'Liberation Mono',monospace;">Switching back to Model space.</div>
<div class="t" style="left:468.57px;top:969.80px;font-size:15px;color:#2e2e2e;letter-spacing:0.089px;font-family:'Liberation Mono',monospace;">Command: *Cancel*</div>
<div class="t" style="left:468.57px;top:989.00px;font-size:15px;color:#2e2e2e;letter-spacing:0.089px;font-family:'Liberation Mono',monospace;">Command: *Cancel*</div>
<div style="left:466px;top:1008px;width:649px;height:24.5px;background:#dedede;border:1px solid #767676;border-top:1px solid #606060"></div>
<svg style="left:471px;top:1013.3px;" width="20" height="15" viewBox="0 0 20 15"><path d="M0.5 0.5H19.5V14.5H0.5Z" fill="#c4c4c4" stroke="#8a8a8a" stroke-width="1"/><path d="M0.5 0.5H19.5V3.5H0.5Z" fill="#9a9a9a"/><path d="M3 7L6 9.5L3 12M7.5 12H11" stroke="#6a6a6a" stroke-width="1.1" fill="none"/></svg>
<svg style="left:493.5px;top:1019.5px;" width="8.5" height="4.5" viewBox="0 0 8.5 4.5"><path d="M0 0H8.5L4.25 4.5Z" fill="#5a5a5a"/></svg>
<div class="t" style="left:510.71px;top:1013.00px;font-size:15px;color:#7a7a7a;letter-spacing:-0.009px;font-family:'Liberation Mono',monospace;font-style:italic;">Type a command</div>
<svg style="left:1101px;top:1019px;" width="9" height="5" viewBox="0 0 9 5"><path d="M0 5H9L4.5 0Z" fill="#555"/></svg>
<div style="left:1355px;top:235px;width:560px;height:27px;background:#2e3542;border-radius:5px 0 0 0"></div>
<svg style="left:1363.5px;top:243px;" width="4" height="11" viewBox="0 0 4 11"><path d="M0.5 0V11M2.8 0V11" stroke="#9aa0aa" stroke-width="1" stroke-dasharray="1 1"/></svg>
<div class="t" style="left:1373.28px;top:237.58px;color:#f4f4f4;letter-spacing:-0.300px;transform:scaleX(0.9402);transform-origin:left center;">LAYER PROPERTIES MANAGER</div>
<div class="t" style="left:1360.56px;top:274.98px;letter-spacing:-0.137px;">Current layer: Janelas</div>
<div style="left:1759px;top:270.3px;width:156px;height:19.5px;background:#4d596e;"></div>
<div class="t" style="left:1758.84px;top:270.48px;color:#a8b0bc;letter-spacing:0.070px;">Search for layer</div>
<svg style="left:1896px;top:271px;" width="17" height="17" viewBox="0 0 17 17"><circle cx="6.5" cy="6.5" r="5" fill="none" stroke="#e0e0e0" stroke-width="1.5"/><path d="M10 10L15.5 15.5" stroke="#e0a050" stroke-width="2"/></svg>
<svg style="left:1358px;top:302px;" width="21" height="21" viewBox="0 0 21 21"><g transform="scale(0.95)"><path d="M0 1H7L9 3.5H16V14H0Z" fill="#d4d4d4"/><path d="M0 4.5H16V5.5H0Z" fill="#bdbdbd"/></g><path d="M9 10.5H20.5L16.2 15V20.5L13.3 19V15Z" fill="#c8c8c8" stroke="#3b4453" stroke-width="0.8"/></svg>
<svg style="left:1385.5px;top:304px;" width="18" height="16" viewBox="0 0 18 16"><g transform="scale(1.08)"><path d="M0 1H7L9 3.5H16V14H0Z" fill="#d4d4d4"/><path d="M0 4.5H16V5.5H0Z" fill="#bdbdbd"/></g></svg>
<div style="left:1412px;top:300.5px;width:1.2px;height:23px;background:#222933;"></div>
<svg style="left:1420px;top:302px;" width="22" height="21" viewBox="0 0 22 21"><path d="M6 0H18L12 5.5H0Z" fill="#d9d9d9"/><path d="M6 6.5H12L6 12H0Z" fill="#a4a4a4"/><path d="M9.5 6.5H20.5V20.5H9.5Z" fill="#f0f0f0"/><path d="M11.5 9H18.5V13H11.5Z" fill="#4aa4ec"/><path d="M12 16.5H18" stroke="#777" stroke-width="1.2"/></svg>
<svg style="left:1452px;top:302px;" width="23" height="22" viewBox="0 0 23 22"><path d="M6 0.0H18L12 4.8H0Z" fill="#d9d9d9"/><path d="M6 5.3H18L12 10.1H0Z" fill="#d9d9d9"/><path d="M6 10.6H18L12 15.399999999999999H0Z" fill="#d9d9d9"/><g transform="translate(4,8.5) scale(0.7)"><path d="M15 0L16.3 3.5L20 2L18.3 5.5L22 6.5L18.3 7.8L20 11L16.3 9.5L15 13L13.8 9.5L10 11L11.8 7.8L8 6.5L11.8 5.5L10 2L13.8 3.5Z" fill="#f6c860"/></g></svg>
<svg style="left:1479px;top:302px;" width="23" height="22" viewBox="0 0 23 22"><path d="M6 0.0H18L12 4.8H0Z" fill="#d9d9d9"/><path d="M6 5.3H18L12 10.1H0Z" fill="#d9d9d9"/><path d="M6 10.6H18L12 15.399999999999999H0Z" fill="#d9d9d9"/><g transform="translate(15.5,15.5)" stroke="#5ccfd6" stroke-width="1.2"><path d="M-5 0H5M-2.5 -4.3L2.5 4.3M2.5 -4.3L-2.5 4.3"/><circle r="3" fill="none" stroke-width="0.8"/></g></svg>
<svg style="left:1506px;top:302px;" width="23" height="22" viewBox="0 0 23 22"><path d="M6 0.0H18L12 4.8H0Z" fill="#d9d9d9"/><path d="M6 5.3H18L12 10.1H0Z" fill="#d9d9d9"/><path d="M6 10.6H18L12 15.399999999999999H0Z" fill="#d9d9d9"/><path d="M12.5 12.5L19 19M19 12.5L12.5 19" stroke="#f0404c" stroke-width="2"/></svg>
<svg style="left:1533px;top:302px;" width="23" height="22" viewBox="0 0 23 22"><path d="M6 0.0H18L12 4.8H0Z" fill="#d9d9d9"/><path d="M6 5.3H18L12 10.1H0Z" fill="#d9d9d9"/><path d="M6 10.6H18L12 15.399999999999999H0Z" fill="#d9d9d9"/><path d="M11 15.5L13.5 18.5L18.5 12.5" stroke="#58c878" stroke-width="2" fill="none"/></svg>
<svg style="left:1825px;top:301px;" width="22" height="22" viewBox="0 0 22 22"><path d="M3.5 9.5A8 8 0 0 1 17.5 5.5" stroke="#3ecf6e" stroke-width="2.6" fill="none"/><path d="M20.5 2V9.5H13Z" fill="#3ecf6e"/><path d="M18.5 12.5A8 8 0 0 1 4.5 16.5" stroke="#3ecf6e" stroke-width="2.6" fill="none"/><path d="M1.5 20V12.5H9Z" fill="#3ecf6e"/></svg>
<svg style="left:1853px;top:303px;" width="20" height="18" viewBox="0 0 20 18"><path d="M1 1H11V10H1Z" fill="#d0d0d0"/><path d="M11 6H19L12 16H3L7 10H11Z" fill="#8a8f98"/></svg>
<svg style="left:1879px;top:301px;" width="22" height="22" viewBox="0 0 22 22"><g transform="translate(11,11)"><rect x="-2.2" y="-10.5" width="4.4" height="6" fill="#e4e4e4" transform="rotate(0)"/><rect x="-2.2" y="-10.5" width="4.4" height="6" fill="#e4e4e4" transform="rotate(45)"/><rect x="-2.2" y="-10.5" width="4.4" height="6" fill="#e4e4e4" transform="rotate(90)"/><rect x="-2.2" y="-10.5" width="4.4" height="6" fill="#e4e4e4" transform="rotate(135)"/><rect x="-2.2" y="-10.5" width="4.4" height="6" fill="#e4e4e4" transform="rotate(180)"/><rect x="-2.2" y="-10.5" width="4.4" height="6" fill="#e4e4e4" transform="rotate(225)"/><rect x="-2.2" y="-10.5" width="4.4" height="6" fill="#e4e4e4" transform="rotate(270)"/><rect x="-2.2" y="-10.5" width="4.4" height="6" fill="#e4e4e4" transform="rotate(315)"/><circle r="7.3" fill="#e4e4e4"/><circle r="3.3" fill="#3b4453"/></g></svg>
<div style="left:1354.8px;top:326.5px;width:31.5px;height:654.5px;border:1px solid #2a303b"></div>
<svg style="left:1366.5px;top:335px;" width="15" height="11" viewBox="0 0 15 11"><path d="M1.5 1L6.5 5.5L1.5 10M8.5 1L13.5 5.5L8.5 10" stroke="#e0e0e0" stroke-width="2" fill="none"/></svg>
<svg style="left:1366.5px;top:964.5px;" width="15" height="11" viewBox="0 0 15 11"><path d="M1.5 1L6.5 5.5L1.5 10M8.5 1L13.5 5.5L8.5 10" stroke="#e0e0e0" stroke-width="2" fill="none"/></svg>
<div style="left:1507px;top:327px;width:3.2px;height:634px;background:#2a303b;"></div>
<div style="left:1393px;top:326.6px;width:113.8px;height:28.6px;background:#333b49;"></div>
<div style="left:1510.3px;top:326.6px;width:404.2px;height:28.6px;background:#333b49;"></div>
<div style="left:1393px;top:326.6px;width:23px;height:28.6px;background:#414c5e;"></div>
<div class="t" style="left:1397.42px;top:330.98px;color:#eef0f2;letter-spacing:-0.300px;transform:scaleX(0.8742);transform-origin:left center;">S...</div>
<div style="left:1416.8px;top:326.6px;width:90.0px;height:28.6px;background:#414c5e;"></div>
<div class="t" style="left:1420.11px;top:330.98px;color:#eef0f2;letter-spacing:0.952px;">Name</div>
<div style="left:1510.3px;top:326.6px;width:22.600000000000136px;height:28.6px;background:#414c5e;"></div>
<div class="t" style="left:1514.03px;top:330.98px;color:#eef0f2;letter-spacing:-0.300px;transform:scaleX(0.9747);transform-origin:left center;">O..</div>
<div style="left:1533.7px;top:326.6px;width:22.09999999999991px;height:28.6px;background:#414c5e;"></div>
<div class="t" style="left:1536.81px;top:330.98px;color:#eef0f2;letter-spacing:-0.274px;">F...</div>
<div style="left:1556.6px;top:326.6px;width:61.600000000000136px;height:28.6px;background:#414c5e;"></div>
<div class="t" style="left:1560.94px;top:330.98px;color:#eef0f2;letter-spacing:-0.300px;transform:scaleX(0.9594);transform-origin:left center;">VP Fre...</div>
<div style="left:1619px;top:326.6px;width:22.5px;height:28.6px;background:#414c5e;"></div>
<div class="t" style="left:1623.29px;top:330.98px;color:#eef0f2;letter-spacing:-0.300px;transform:scaleX(0.8485);transform-origin:left center;">L...</div>
<div style="left:1642.3px;top:326.6px;width:22.5px;height:28.6px;background:#414c5e;"></div>
<div class="t" style="left:1646.17px;top:330.98px;color:#eef0f2;letter-spacing:-0.300px;transform:scaleX(0.9530);transform-origin:left center;">P...</div>
<div style="left:1665.6px;top:326.6px;width:58.80000000000018px;height:28.6px;background:#414c5e;"></div>
<div class="t" style="left:1669.16px;top:330.98px;color:#eef0f2;letter-spacing:0.607px;">Color</div>
<div style="left:1725.2px;top:326.6px;width:59.09999999999991px;height:28.6px;background:#414c5e;"></div>
<div class="t" style="left:1729.84px;top:330.98px;color:#eef0f2;letter-spacing:-0.300px;transform:scaleX(0.9673);transform-origin:left center;">VP Co...</div>
<div style="left:1785.1px;top:326.6px;width:79.10000000000014px;height:28.6px;background:#414c5e;"></div>
<div class="t" style="left:1788.61px;top:330.98px;color:#eef0f2;letter-spacing:0.459px;">Linetype</div>
<div style="left:1865px;top:326.6px;width:49.5px;height:28.6px;background:#414c5e;"></div>
<div style="left:1870px;top:331px;width:44.5px;height:20px;overflow:hidden"><div class="t" style="left:0;top:0;color:#eef0f2;transform:scaleX(0.9);transform-origin:left center">VP Linetype</div></div>
<svg style="left:1497.5px;top:337.5px;" width="8" height="5" viewBox="0 0 8 5"><path d="M0 5H8L4 0Z" fill="#d8d8d8"/></svg>
<svg style="left:1395.5px;top:361.6px;" width="17" height="9" viewBox="0 0 17 9"><path d="M6 0.5H16.5L10.5 7.5H0.5Z" fill="#7cc0f4"/><path d="M10.5 7.5L16.5 0.5V1.5L10.8 8.5H0.5V7.5Z" fill="#3b78b4"/></svg>
<div class="t" style="left:1419.23px;top:357.38px;color:#f4f4f4;">0</div>
<svg style="left:1514.5px;top:358.1px;" width="13" height="18" viewBox="0 0 13 18"><g transform="scale(0.88)"><circle cx="7" cy="6.5" r="6.4" fill="#f8cc70"/><path d="M3.8 11H10.2L9.5 14.5H4.5Z" fill="#f8cc70"/><path d="M4.5 14.5H9.5V16C9.5 18 4.5 18 4.5 16Z" fill="#f4f4f4"/></g></svg>
<svg style="left:1535px;top:358.1px;" width="18" height="18" viewBox="0 0 18 18"><circle cx="9" cy="9" r="4.2" fill="#f8cc70"/><path d="M14.50 9.00L17.30 9.00" stroke="#f8cc70" stroke-width="1.3"/><path d="M12.89 12.89L14.87 14.87" stroke="#f8cc70" stroke-width="1.3"/><path d="M9.00 14.50L9.00 17.30" stroke="#f8cc70" stroke-width="1.3"/><path d="M5.11 12.89L3.13 14.87" stroke="#f8cc70" stroke-width="1.3"/><path d="M3.50 9.00L0.70 9.00" stroke="#f8cc70" stroke-width="1.3"/><path d="M5.11 5.11L3.13 3.13" stroke="#f8cc70" stroke-width="1.3"/><path d="M9.00 3.50L9.00 0.70" stroke="#f8cc70" stroke-width="1.3"/><path d="M12.89 5.11L14.87 3.13" stroke="#f8cc70" stroke-width="1.3"/></svg>
<svg style="left:1578.5px;top:357.6px;" width="17" height="18" viewBox="0 0 17 18"><path d="M2 2.5H11.5V13H2Z" fill="#69707c"/><path d="M0.7 4.5V1H4M9.5 1H13V4.5M0.7 10.5V14.2H4" stroke="#d6d6d6" stroke-width="1.3" fill="none"/><g transform="translate(11.3,12.8)" stroke="#5ccfd6" stroke-width="1.9"><path d="M-4 0H4M-2 -3.5L2 3.5M2 -3.5L-2 3.5"/></g></svg>
<svg style="left:1621.5px;top:357.6px;" width="16" height="18" viewBox="0 0 16 18"><g transform="scale(0.86)"><path d="M0 9H13V19H0Z" fill="#f8cc70"/><path d="M9.5 9V5.5C9.5 1.5 16 1.5 16 5.5V8" stroke="#f8cc70" stroke-width="2.2" fill="none"/><path d="M6 12.5H7.5V16H6Z" fill="#4d596e"/></g></svg>
<svg style="left:1644.5px;top:359.6px;" width="17" height="16" viewBox="0 0 17 16"><path d="M4 0H13V4H4Z" fill="#f4f4f4"/><path d="M0.5 4H16.5V11.5H0.5Z" fill="#e0e0e0"/><path d="M3.5 8.5H13.5V14.5H3.5Z" fill="#5cb0f0" stroke="#f4f4f4" stroke-width="1"/></svg>
<div style="left:1668px;top:359.1px;width:13.4px;height:13.4px;background:#000000;border:1px solid #d4d4d4"></div>
<div class="t" style="left:1687.72px;top:357.38px;color:#f4f4f4;letter-spacing:0.621px;">wh...</div>
<div style="left:1728px;top:359.1px;width:13.4px;height:13.4px;background:#000000;border:1px solid #d4d4d4"></div>
<div class="t" style="left:1747.72px;top:357.38px;color:#f4f4f4;letter-spacing:0.621px;">wh...</div>
<div class="t" style="left:1787.26px;top:357.38px;color:#f4f4f4;letter-spacing:0.555px;">Continu...</div>
<div class="t" style="left:1868.3px;top:357.4px;width:44.2px;overflow:hidden;color:#f4f4f4;letter-spacing:0.3px">Continuous</div>
<svg style="left:1395.5px;top:384.6px;" width="17" height="9" viewBox="0 0 17 9"><path d="M6 0.5H16.5L10.5 7.5H0.5Z" fill="#7cc0f4"/><path d="M10.5 7.5L16.5 0.5V1.5L10.8 8.5H0.5V7.5Z" fill="#3b78b4"/></svg>
<div class="t" style="left:1419.18px;top:380.38px;color:#f4f4f4;letter-spacing:0.671px;">circulo</div>
<svg style="left:1514.5px;top:381.1px;" width="13" height="18" viewBox="0 0 13 18"><g transform="scale(0.88)"><circle cx="7" cy="6.5" r="6.4" fill="#f8cc70"/><path d="M3.8 11H10.2L9.5 14.5H4.5Z" fill="#f8cc70"/><path d="M4.5 14.5H9.5V16C9.5 18 4.5 18 4.5 16Z" fill="#f4f4f4"/></g></svg>
<svg style="left:1535px;top:381.1px;" width="18" height="18" viewBox="0 0 18 18"><circle cx="9" cy="9" r="4.2" fill="#f8cc70"/><path d="M14.50 9.00L17.30 9.00" stroke="#f8cc70" stroke-width="1.3"/><path d="M12.89 12.89L14.87 14.87" stroke="#f8cc70" stroke-width="1.3"/><path d="M9.00 14.50L9.00 17.30" stroke="#f8cc70" stroke-width="1.3"/><path d="M5.11 12.89L3.13 14.87" stroke="#f8cc70" stroke-width="1.3"/><path d="M3.50 9.00L0.70 9.00" stroke="#f8cc70" stroke-width="1.3"/><path d="M5.11 5.11L3.13 3.13" stroke="#f8cc70" stroke-width="1.3"/><path d="M9.00 3.50L9.00 0.70" stroke="#f8cc70" stroke-width="1.3"/><path d="M12.89 5.11L14.87 3.13" stroke="#f8cc70" stroke-width="1.3"/></svg>
<svg style="left:1578.5px;top:380.6px;" width="17" height="18" viewBox="0 0 17 18"><path d="M2 2.5H11.5V13H2Z" fill="#69707c"/><path d="M0.7 4.5V1H4M9.5 1H13V4.5M0.7 10.5V14.2H4" stroke="#d6d6d6" stroke-width="1.3" fill="none"/><g transform="translate(11.3,12.8)" stroke="#5ccfd6" stroke-width="1.9"><path d="M-4 0H4M-2 -3.5L2 3.5M2 -3.5L-2 3.5"/></g></svg>
<svg style="left:1621.5px;top:380.6px;" width="16" height="18" viewBox="0 0 16 18"><g transform="scale(0.86)"><path d="M0 9H13V19H0Z" fill="#f8cc70"/><path d="M9.5 9V5.5C9.5 1.5 16 1.5 16 5.5V8" stroke="#f8cc70" stroke-width="2.2" fill="none"/><path d="M6 12.5H7.5V16H6Z" fill="#4d596e"/></g></svg>
<svg style="left:1644.5px;top:382.6px;" width="17" height="16" viewBox="0 0 17 16"><path d="M4 0H13V4H4Z" fill="#f4f4f4"/><path d="M0.5 4H16.5V11.5H0.5Z" fill="#e0e0e0"/><path d="M3.5 8.5H13.5V14.5H3.5Z" fill="#5cb0f0" stroke="#f4f4f4" stroke-width="1"/></svg>
<div style="left:1668px;top:382.1px;width:13.4px;height:13.4px;background:#ffff00;border:1px solid #d4d4d4"></div>
<div class="t" style="left:1687.66px;top:380.38px;color:#f4f4f4;letter-spacing:0.408px;">yel...</div>
<div style="left:1728px;top:382.1px;width:13.4px;height:13.4px;background:#ffff00;border:1px solid #d4d4d4"></div>
<div class="t" style="left:1747.66px;top:380.38px;color:#f4f4f4;letter-spacing:0.408px;">yel...</div>
<div class="t" style="left:1787.26px;top:380.38px;color:#f4f4f4;letter-spacing:0.555px;">Continu...</div>
<div class="t" style="left:1868.3px;top:380.4px;width:44.2px;overflow:hidden;color:#f4f4f4;letter-spacing:0.3px">Continuous</div>
<svg style="left:1395.5px;top:407.6px;" width="17" height="9" viewBox="0 0 17 9"><path d="M6 0.5H16.5L10.5 7.5H0.5Z" fill="#7cc0f4"/><path d="M10.5 7.5L16.5 0.5V1.5L10.8 8.5H0.5V7.5Z" fill="#3b78b4"/></svg>
<div class="t" style="left:1418.61px;top:403.38px;color:#f4f4f4;letter-spacing:0.175px;">Esquadria</div>
<svg style="left:1514.5px;top:404.1px;" width="13" height="18" viewBox="0 0 13 18"><g transform="scale(0.88)"><circle cx="7" cy="6.5" r="6.4" fill="#f8cc70"/><path d="M3.8 11H10.2L9.5 14.5H4.5Z" fill="#f8cc70"/><path d="M4.5 14.5H9.5V16C9.5 18 4.5 18 4.5 16Z" fill="#f4f4f4"/></g></svg>
<svg style="left:1535px;top:404.1px;" width="18" height="18" viewBox="0 0 18 18"><circle cx="9" cy="9" r="4.2" fill="#f8cc70"/><path d="M14.50 9.00L17.30 9.00" stroke="#f8cc70" stroke-width="1.3"/><path d="M12.89 12.89L14.87 14.87" stroke="#f8cc70" stroke-width="1.3"/><path d="M9.00 14.50L9.00 17.30" stroke="#f8cc70" stroke-width="1.3"/><path d="M5.11 12.89L3.13 14.87" stroke="#f8cc70" stroke-width="1.3"/><path d="M3.50 9.00L0.70 9.00" stroke="#f8cc70" stroke-width="1.3"/><path d="M5.11 5.11L3.13 3.13" stroke="#f8cc70" stroke-width="1.3"/><path d="M9.00 3.50L9.00 0.70" stroke="#f8cc70" stroke-width="1.3"/><path d="M12.89 5.11L14.87 3.13" stroke="#f8cc70" stroke-width="1.3"/></svg>
<svg style="left:1578.5px;top:403.6px;" width="17" height="18" viewBox="0 0 17 18"><path d="M2 2.5H11.5V13H2Z" fill="#69707c"/><path d="M0.7 4.5V1H4M9.5 1H13V4.5M0.7 10.5V14.2H4" stroke="#d6d6d6" stroke-width="1.3" fill="none"/><g transform="translate(11.3,12.8)" stroke="#5ccfd6" stroke-width="1.9"><path d="M-4 0H4M-2 -3.5L2 3.5M2 -3.5L-2 3.5"/></g></svg>
<svg style="left:1621.5px;top:403.6px;" width="16" height="18" viewBox="0 0 16 18"><g transform="scale(0.86)"><path d="M0 9H13V19H0Z" fill="#f8cc70"/><path d="M9.5 9V5.5C9.5 1.5 16 1.5 16 5.5V8" stroke="#f8cc70" stroke-width="2.2" fill="none"/><path d="M6 12.5H7.5V16H6Z" fill="#4d596e"/></g></svg>
<svg style="left:1644.5px;top:405.6px;" width="17" height="16" viewBox="0 0 17 16"><path d="M4 0H13V4H4Z" fill="#f4f4f4"/><path d="M0.5 4H16.5V11.5H0.5Z" fill="#e0e0e0"/><path d="M3.5 8.5H13.5V14.5H3.5Z" fill="#5cb0f0" stroke="#f4f4f4" stroke-width="1"/></svg>
<div style="left:1668px;top:405.1px;width:13.4px;height:13.4px;background:#5b5b5b;border:1px solid #d4d4d4"></div>
<div class="t" style="left:1688.48px;top:403.38px;color:#f4f4f4;letter-spacing:-0.300px;transform:scaleX(0.9849);transform-origin:left center;">252</div>
<div style="left:1728px;top:405.1px;width:13.4px;height:13.4px;background:#5b5b5b;border:1px solid #d4d4d4"></div>
<div class="t" style="left:1748.48px;top:403.38px;color:#f4f4f4;letter-spacing:-0.300px;transform:scaleX(0.9849);transform-origin:left center;">252</div>
<div class="t" style="left:1787.26px;top:403.38px;color:#f4f4f4;letter-spacing:0.555px;">Continu...</div>
<div class="t" style="left:1868.3px;top:403.4px;width:44.2px;overflow:hidden;color:#f4f4f4;letter-spacing:0.3px">Continuous</div>
<svg style="left:1396px;top:429.3px;" width="16" height="13" viewBox="0 0 16 13"><path d="M1.5 6.5L6 11L14.5 1.5" stroke="#4fd06c" stroke-width="2.3" fill="none"/></svg>
<div class="t" style="left:1419.57px;top:426.38px;color:#f4f4f4;letter-spacing:-0.171px;">Janelas</div>
<svg style="left:1514.5px;top:427.1px;" width="13" height="18" viewBox="0 0 13 18"><g transform="scale(0.88)"><circle cx="7" cy="6.5" r="6.4" fill="#f8cc70"/><path d="M3.8 11H10.2L9.5 14.5H4.5Z" fill="#f8cc70"/><path d="M4.5 14.5H9.5V16C9.5 18 4.5 18 4.5 16Z" fill="#f4f4f4"/></g></svg>
<svg style="left:1535px;top:427.1px;" width="18" height="18" viewBox="0 0 18 18"><circle cx="9" cy="9" r="4.2" fill="#f8cc70"/><path d="M14.50 9.00L17.30 9.00" stroke="#f8cc70" stroke-width="1.3"/><path d="M12.89 12.89L14.87 14.87" stroke="#f8cc70" stroke-width="1.3"/><path d="M9.00 14.50L9.00 17.30" stroke="#f8cc70" stroke-width="1.3"/><path d="M5.11 12.89L3.13 14.87" stroke="#f8cc70" stroke-width="1.3"/><path d="M3.50 9.00L0.70 9.00" stroke="#f8cc70" stroke-width="1.3"/><path d="M5.11 5.11L3.13 3.13" stroke="#f8cc70" stroke-width="1.3"/><path d="M9.00 3.50L9.00 0.70" stroke="#f8cc70" stroke-width="1.3"/><path d="M12.89 5.11L14.87 3.13" stroke="#f8cc70" stroke-width="1.3"/></svg>
<svg style="left:1578.5px;top:426.6px;" width="17" height="18" viewBox="0 0 17 18"><path d="M2 2.5H11.5V13H2Z" fill="#69707c"/><path d="M0.7 4.5V1H4M9.5 1H13V4.5M0.7 10.5V14.2H4" stroke="#d6d6d6" stroke-width="1.3" fill="none"/><g transform="translate(5.5,7) scale(0.5)"><circle cx="9.5" cy="9.5" r="4.6" fill="#f8cc70"/><path d="M15.40 9.50L18.80 9.50" stroke="#f8cc70" stroke-width="2.8"/><path d="M13.67 13.67L16.08 16.08" stroke="#f8cc70" stroke-width="2.8"/><path d="M9.50 15.40L9.50 18.80" stroke="#f8cc70" stroke-width="2.8"/><path d="M5.33 13.67L2.92 16.08" stroke="#f8cc70" stroke-width="2.8"/><path d="M3.60 9.50L0.20 9.50" stroke="#f8cc70" stroke-width="2.8"/><path d="M5.33 5.33L2.92 2.92" stroke="#f8cc70" stroke-width="2.8"/><path d="M9.50 3.60L9.50 0.20" stroke="#f8cc70" stroke-width="2.8"/><path d="M13.67 5.33L16.08 2.92" stroke="#f8cc70" stroke-width="2.8"/></g></svg>
<svg style="left:1621.5px;top:426.6px;" width="16" height="18" viewBox="0 0 16 18"><g transform="scale(0.86)"><path d="M0 9H13V19H0Z" fill="#f8cc70"/><path d="M9.5 9V5.5C9.5 1.5 16 1.5 16 5.5V8" stroke="#f8cc70" stroke-width="2.2" fill="none"/><path d="M6 12.5H7.5V16H6Z" fill="#4d596e"/></g></svg>
<svg style="left:1644.5px;top:428.6px;" width="17" height="16" viewBox="0 0 17 16"><path d="M4 0H13V4H4Z" fill="#f4f4f4"/><path d="M0.5 4H16.5V11.5H0.5Z" fill="#e0e0e0"/><path d="M3.5 8.5H13.5V14.5H3.5Z" fill="#5cb0f0" stroke="#f4f4f4" stroke-width="1"/><circle cx="11.5" cy="10.5" r="4.3" fill="#f0484c"/><path d="M9 10.5H14" stroke="#fff" stroke-width="1.4"/></svg>
<div style="left:1668px;top:428.1px;width:13.4px;height:13.4px;background:#ff7f00;border:1px solid #d4d4d4"></div>
<div class="t" style="left:1688.66px;top:426.38px;color:#f4f4f4;letter-spacing:-0.300px;transform:scaleX(0.9722);transform-origin:left center;">30</div>
<div style="left:1728px;top:428.1px;width:13.4px;height:13.4px;background:#ff7f00;border:1px solid #d4d4d4"></div>
<div class="t" style="left:1748.66px;top:426.38px;color:#f4f4f4;letter-spacing:-0.300px;transform:scaleX(0.9722);transform-origin:left center;">30</div>
<div class="t" style="left:1787.26px;top:426.38px;color:#f4f4f4;letter-spacing:0.555px;">Continu...</div>
<div class="t" style="left:1868.3px;top:426.4px;width:44.2px;overflow:hidden;color:#f4f4f4;letter-spacing:0.3px">Continuous</div>
<svg style="left:1395.5px;top:453.6px;" width="17" height="9" viewBox="0 0 17 9"><path d="M6 0.5H16.5L10.5 7.5H0.5Z" fill="#7cc0f4"/><path d="M10.5 7.5L16.5 0.5V1.5L10.8 8.5H0.5V7.5Z" fill="#3b78b4"/></svg>
<div class="t" style="left:1418.82px;top:449.38px;color:#f4f4f4;letter-spacing:0.907px;">linhauxil</div>
<svg style="left:1514.5px;top:450.1px;" width="13" height="18" viewBox="0 0 13 18"><g transform="scale(0.88)"><circle cx="7" cy="6.5" r="6.4" fill="#5ccfd6"/><path d="M3.8 11H10.2L9.5 14.5H4.5Z" fill="#5ccfd6"/><path d="M4.5 14.5H9.5V16C9.5 18 4.5 18 4.5 16Z" fill="#f4f4f4"/></g></svg>
<svg style="left:1535px;top:450.1px;" width="18" height="18" viewBox="0 0 18 18"><circle cx="9" cy="9" r="4.2" fill="#f8cc70"/><path d="M14.50 9.00L17.30 9.00" stroke="#f8cc70" stroke-width="1.3"/><path d="M12.89 12.89L14.87 14.87" stroke="#f8cc70" stroke-width="1.3"/><path d="M9.00 14.50L9.00 17.30" stroke="#f8cc70" stroke-width="1.3"/><path d="M5.11 12.89L3.13 14.87" stroke="#f8cc70" stroke-width="1.3"/><path d="M3.50 9.00L0.70 9.00" stroke="#f8cc70" stroke-width="1.3"/><path d="M5.11 5.11L3.13 3.13" stroke="#f8cc70" stroke-width="1.3"/><path d="M9.00 3.50L9.00 0.70" stroke="#f8cc70" stroke-width="1.3"/><path d="M12.89 5.11L14.87 3.13" stroke="#f8cc70" stroke-width="1.3"/></svg>
<svg style="left:1578.5px;top:449.6px;" width="17" height="18" viewBox="0 0 17 18"><path d="M2 2.5H11.5V13H2Z" fill="#69707c"/><path d="M0.7 4.5V1H4M9.5 1H13V4.5M0.7 10.5V14.2H4" stroke="#d6d6d6" stroke-width="1.3" fill="none"/><g transform="translate(11.3,12.8)" stroke="#5ccfd6" stroke-width="1.9"><path d="M-4 0H4M-2 -3.5L2 3.5M2 -3.5L-2 3.5"/></g></svg>
<svg style="left:1621.5px;top:449.6px;" width="16" height="18" viewBox="0 0 16 18"><g transform="scale(0.86)"><path d="M0 9H13V19H0Z" fill="#f8cc70"/><path d="M9.5 9V5.5C9.5 1.5 16 1.5 16 5.5V8" stroke="#f8cc70" stroke-width="2.2" fill="none"/><path d="M6 12.5H7.5V16H6Z" fill="#4d596e"/></g></svg>
<svg style="left:1644.5px;top:451.6px;" width="17" height="16" viewBox="0 0 17 16"><path d="M4 0H13V4H4Z" fill="#f4f4f4"/><path d="M0.5 4H16.5V11.5H0.5Z" fill="#e0e0e0"/><path d="M3.5 8.5H13.5V14.5H3.5Z" fill="#5cb0f0" stroke="#f4f4f4" stroke-width="1"/></svg>
<div style="left:1668px;top:451.1px;width:13.4px;height:13.4px;background:#ffbf00;border:1px solid #d4d4d4"></div>
<div class="t" style="left:1688.88px;top:449.38px;color:#f4f4f4;letter-spacing:-0.300px;transform:scaleX(0.9579);transform-origin:left center;">40</div>
<div style="left:1728px;top:451.1px;width:13.4px;height:13.4px;background:#ffbf00;border:1px solid #d4d4d4"></div>
<div class="t" style="left:1748.88px;top:449.38px;color:#f4f4f4;letter-spacing:-0.300px;transform:scaleX(0.9579);transform-origin:left center;">40</div>
<div class="t" style="left:1787.26px;top:449.38px;color:#f4f4f4;letter-spacing:0.555px;">Continu...</div>
<div class="t" style="left:1868.3px;top:449.4px;width:44.2px;overflow:hidden;color:#f4f4f4;letter-spacing:0.3px">Continuous</div>
<svg style="left:1395.5px;top:476.6px;" width="17" height="9" viewBox="0 0 17 9"><path d="M6 0.5H16.5L10.5 7.5H0.5Z" fill="#7cc0f4"/><path d="M10.5 7.5L16.5 0.5V1.5L10.8 8.5H0.5V7.5Z" fill="#3b78b4"/></svg>
<div class="t" style="left:1418.87px;top:472.38px;color:#f4f4f4;letter-spacing:0.943px;">pentagulo</div>
<svg style="left:1514.5px;top:473.1px;" width="13" height="18" viewBox="0 0 13 18"><g transform="scale(0.88)"><circle cx="7" cy="6.5" r="6.4" fill="#f8cc70"/><path d="M3.8 11H10.2L9.5 14.5H4.5Z" fill="#f8cc70"/><path d="M4.5 14.5H9.5V16C9.5 18 4.5 18 4.5 16Z" fill="#f4f4f4"/></g></svg>
<svg style="left:1535px;top:473.1px;" width="18" height="18" viewBox="0 0 18 18"><circle cx="9" cy="9" r="4.2" fill="#f8cc70"/><path d="M14.50 9.00L17.30 9.00" stroke="#f8cc70" stroke-width="1.3"/><path d="M12.89 12.89L14.87 14.87" stroke="#f8cc70" stroke-width="1.3"/><path d="M9.00 14.50L9.00 17.30" stroke="#f8cc70" stroke-width="1.3"/><path d="M5.11 12.89L3.13 14.87" stroke="#f8cc70" stroke-width="1.3"/><path d="M3.50 9.00L0.70 9.00" stroke="#f8cc70" stroke-width="1.3"/><path d="M5.11 5.11L3.13 3.13" stroke="#f8cc70" stroke-width="1.3"/><path d="M9.00 3.50L9.00 0.70" stroke="#f8cc70" stroke-width="1.3"/><path d="M12.89 5.11L14.87 3.13" stroke="#f8cc70" stroke-width="1.3"/></svg>
<svg style="left:1578.5px;top:472.6px;" width="17" height="18" viewBox="0 0 17 18"><path d="M2 2.5H11.5V13H2Z" fill="#69707c"/><path d="M0.7 4.5V1H4M9.5 1H13V4.5M0.7 10.5V14.2H4" stroke="#d6d6d6" stroke-width="1.3" fill="none"/><g transform="translate(11.3,12.8)" stroke="#5ccfd6" stroke-width="1.9"><path d="M-4 0H4M-2 -3.5L2 3.5M2 -3.5L-2 3.5"/></g></svg>
<svg style="left:1621.5px;top:472.6px;" width="16" height="18" viewBox="0 0 16 18"><g transform="scale(0.86)"><path d="M0 9H13V19H0Z" fill="#f8cc70"/><path d="M9.5 9V5.5C9.5 1.5 16 1.5 16 5.5V8" stroke="#f8cc70" stroke-width="2.2" fill="none"/><path d="M6 12.5H7.5V16H6Z" fill="#4d596e"/></g></svg>
<svg style="left:1644.5px;top:474.6px;" width="17" height="16" viewBox="0 0 17 16"><path d="M4 0H13V4H4Z" fill="#f4f4f4"/><path d="M0.5 4H16.5V11.5H0.5Z" fill="#e0e0e0"/><path d="M3.5 8.5H13.5V14.5H3.5Z" fill="#5cb0f0" stroke="#f4f4f4" stroke-width="1"/></svg>
<div style="left:1668px;top:474.1px;width:13.4px;height:13.4px;background:#00ffff;border:1px solid #d4d4d4"></div>
<div class="t" style="left:1688.58px;top:472.38px;color:#f4f4f4;letter-spacing:-0.090px;">cyan</div>
<div style="left:1728px;top:474.1px;width:13.4px;height:13.4px;background:#00ffff;border:1px solid #d4d4d4"></div>
<div class="t" style="left:1748.58px;top:472.38px;color:#f4f4f4;letter-spacing:-0.090px;">cyan</div>
<div class="t" style="left:1787.26px;top:472.38px;color:#f4f4f4;letter-spacing:0.555px;">Continu...</div>
<div class="t" style="left:1868.3px;top:472.4px;width:44.2px;overflow:hidden;color:#f4f4f4;letter-spacing:0.3px">Continuous</div>
<svg style="left:1395.5px;top:499.6px;" width="17" height="9" viewBox="0 0 17 9"><path d="M6 0.5H16.5L10.5 7.5H0.5Z" fill="#7cc0f4"/><path d="M10.5 7.5L16.5 0.5V1.5L10.8 8.5H0.5V7.5Z" fill="#3b78b4"/></svg>
<div class="t" style="left:1419.19px;top:495.38px;color:#f4f4f4;letter-spacing:0.806px;">quadrado</div>
<svg style="left:1514.5px;top:496.1px;" width="13" height="18" viewBox="0 0 13 18"><g transform="scale(0.88)"><circle cx="7" cy="6.5" r="6.4" fill="#f8cc70"/><path d="M3.8 11H10.2L9.5 14.5H4.5Z" fill="#f8cc70"/><path d="M4.5 14.5H9.5V16C9.5 18 4.5 18 4.5 16Z" fill="#f4f4f4"/></g></svg>
<svg style="left:1535px;top:496.1px;" width="18" height="18" viewBox="0 0 18 18"><circle cx="9" cy="9" r="4.2" fill="#f8cc70"/><path d="M14.50 9.00L17.30 9.00" stroke="#f8cc70" stroke-width="1.3"/><path d="M12.89 12.89L14.87 14.87" stroke="#f8cc70" stroke-width="1.3"/><path d="M9.00 14.50L9.00 17.30" stroke="#f8cc70" stroke-width="1.3"/><path d="M5.11 12.89L3.13 14.87" stroke="#f8cc70" stroke-width="1.3"/><path d="M3.50 9.00L0.70 9.00" stroke="#f8cc70" stroke-width="1.3"/><path d="M5.11 5.11L3.13 3.13" stroke="#f8cc70" stroke-width="1.3"/><path d="M9.00 3.50L9.00 0.70" stroke="#f8cc70" stroke-width="1.3"/><path d="M12.89 5.11L14.87 3.13" stroke="#f8cc70" stroke-width="1.3"/></svg>
<svg style="left:1578.5px;top:495.6px;" width="17" height="18" viewBox="0 0 17 18"><path d="M2 2.5H11.5V13H2Z" fill="#69707c"/><path d="M0.7 4.5V1H4M9.5 1H13V4.5M0.7 10.5V14.2H4" stroke="#d6d6d6" stroke-width="1.3" fill="none"/><g transform="translate(5.5,7) scale(0.5)"><circle cx="9.5" cy="9.5" r="4.6" fill="#f8cc70"/><path d="M15.40 9.50L18.80 9.50" stroke="#f8cc70" stroke-width="2.8"/><path d="M13.67 13.67L16.08 16.08" stroke="#f8cc70" stroke-width="2.8"/><path d="M9.50 15.40L9.50 18.80" stroke="#f8cc70" stroke-width="2.8"/><path d="M5.33 13.67L2.92 16.08" stroke="#f8cc70" stroke-width="2.8"/><path d="M3.60 9.50L0.20 9.50" stroke="#f8cc70" stroke-width="2.8"/><path d="M5.33 5.33L2.92 2.92" stroke="#f8cc70" stroke-width="2.8"/><path d="M9.50 3.60L9.50 0.20" stroke="#f8cc70" stroke-width="2.8"/><path d="M13.67 5.33L16.08 2.92" stroke="#f8cc70" stroke-width="2.8"/></g></svg>
<svg style="left:1621.5px;top:495.6px;" width="16" height="18" viewBox="0 0 16 18"><g transform="scale(0.86)"><path d="M0 9H13V19H0Z" fill="#f8cc70"/><path d="M9.5 9V5.5C9.5 1.5 16 1.5 16 5.5V8" stroke="#f8cc70" stroke-width="2.2" fill="none"/><path d="M6 12.5H7.5V16H6Z" fill="#4d596e"/></g></svg>
<svg style="left:1644.5px;top:497.6px;" width="17" height="16" viewBox="0 0 17 16"><path d="M4 0H13V4H4Z" fill="#f4f4f4"/><path d="M0.5 4H16.5V11.5H0.5Z" fill="#e0e0e0"/><path d="M3.5 8.5H13.5V14.5H3.5Z" fill="#5cb0f0" stroke="#f4f4f4" stroke-width="1"/></svg>
<div style="left:1668px;top:497.1px;width:13.4px;height:13.4px;background:#ff0000;border:1px solid #d4d4d4"></div>
<div class="t" style="left:1688.24px;top:495.38px;color:#f4f4f4;letter-spacing:0.371px;">red</div>
<div style="left:1728px;top:497.1px;width:13.4px;height:13.4px;background:#ff0000;border:1px solid #d4d4d4"></div>
<div class="t" style="left:1748.24px;top:495.38px;color:#f4f4f4;letter-spacing:0.371px;">red</div>
<div class="t" style="left:1787.26px;top:495.38px;color:#f4f4f4;letter-spacing:0.555px;">Continu...</div>
<div class="t" style="left:1868.3px;top:495.4px;width:44.2px;overflow:hidden;color:#f4f4f4;letter-spacing:0.3px">Continuous</div>
<svg style="left:1395.5px;top:522.6px;" width="17" height="9" viewBox="0 0 17 9"><path d="M6 0.5H16.5L10.5 7.5H0.5Z" fill="#7cc0f4"/><path d="M10.5 7.5L16.5 0.5V1.5L10.8 8.5H0.5V7.5Z" fill="#3b78b4"/></svg>
<div class="t" style="left:1418.84px;top:518.38px;color:#f4f4f4;letter-spacing:0.555px;">rt_ouro</div>
<svg style="left:1514.5px;top:519.1px;" width="13" height="18" viewBox="0 0 13 18"><g transform="scale(0.88)"><circle cx="7" cy="6.5" r="6.4" fill="#f8cc70"/><path d="M3.8 11H10.2L9.5 14.5H4.5Z" fill="#f8cc70"/><path d="M4.5 14.5H9.5V16C9.5 18 4.5 18 4.5 16Z" fill="#f4f4f4"/></g></svg>
<svg style="left:1535px;top:519.1px;" width="18" height="18" viewBox="0 0 18 18"><circle cx="9" cy="9" r="4.2" fill="#f8cc70"/><path d="M14.50 9.00L17.30 9.00" stroke="#f8cc70" stroke-width="1.3"/><path d="M12.89 12.89L14.87 14.87" stroke="#f8cc70" stroke-width="1.3"/><path d="M9.00 14.50L9.00 17.30" stroke="#f8cc70" stroke-width="1.3"/><path d="M5.11 12.89L3.13 14.87" stroke="#f8cc70" stroke-width="1.3"/><path d="M3.50 9.00L0.70 9.00" stroke="#f8cc70" stroke-width="1.3"/><path d="M5.11 5.11L3.13 3.13" stroke="#f8cc70" stroke-width="1.3"/><path d="M9.00 3.50L9.00 0.70" stroke="#f8cc70" stroke-width="1.3"/><path d="M12.89 5.11L14.87 3.13" stroke="#f8cc70" stroke-width="1.3"/></svg>
<svg style="left:1578.5px;top:518.6px;" width="17" height="18" viewBox="0 0 17 18"><path d="M2 2.5H11.5V13H2Z" fill="#69707c"/><path d="M0.7 4.5V1H4M9.5 1H13V4.5M0.7 10.5V14.2H4" stroke="#d6d6d6" stroke-width="1.3" fill="none"/><g transform="translate(11.3,12.8)" stroke="#5ccfd6" stroke-width="1.9"><path d="M-4 0H4M-2 -3.5L2 3.5M2 -3.5L-2 3.5"/></g></svg>
<svg style="left:1621.5px;top:518.6px;" width="16" height="18" viewBox="0 0 16 18"><g transform="scale(0.86)"><path d="M0 9H13V19H0Z" fill="#f8cc70"/><path d="M9.5 9V5.5C9.5 1.5 16 1.5 16 5.5V8" stroke="#f8cc70" stroke-width="2.2" fill="none"/><path d="M6 12.5H7.5V16H6Z" fill="#4d596e"/></g></svg>
<svg style="left:1644.5px;top:520.6px;" width="17" height="16" viewBox="0 0 17 16"><path d="M4 0H13V4H4Z" fill="#f4f4f4"/><path d="M0.5 4H16.5V11.5H0.5Z" fill="#e0e0e0"/><path d="M3.5 8.5H13.5V14.5H3.5Z" fill="#5cb0f0" stroke="#f4f4f4" stroke-width="1"/></svg>
<div style="left:1668px;top:520.1px;width:13.4px;height:13.4px;background:#ff00ff;border:1px solid #d4d4d4"></div>
<div class="t" style="left:1686.74px;top:518.38px;color:#f4f4f4;letter-spacing:0.465px;">ma...</div>
<div style="left:1728px;top:520.1px;width:13.4px;height:13.4px;background:#ff00ff;border:1px solid #d4d4d4"></div>
<div class="t" style="left:1746.74px;top:518.38px;color:#f4f4f4;letter-spacing:0.465px;">ma...</div>
<div class="t" style="left:1787.26px;top:518.38px;color:#f4f4f4;letter-spacing:0.555px;">Continu...</div>
<div class="t" style="left:1868.3px;top:518.4px;width:44.2px;overflow:hidden;color:#f4f4f4;letter-spacing:0.3px">Continuous</div>
<svg style="left:1395.5px;top:545.6px;" width="17" height="9" viewBox="0 0 17 9"><path d="M6 0.5H16.5L10.5 7.5H0.5Z" fill="#7cc0f4"/><path d="M10.5 7.5L16.5 0.5V1.5L10.8 8.5H0.5V7.5Z" fill="#3b78b4"/></svg>
<div class="t" style="left:1418.84px;top:541.38px;color:#f4f4f4;letter-spacing:0.270px;">rt_r2</div>
<svg style="left:1514.5px;top:542.1px;" width="13" height="18" viewBox="0 0 13 18"><g transform="scale(0.88)"><circle cx="7" cy="6.5" r="6.4" fill="#f8cc70"/><path d="M3.8 11H10.2L9.5 14.5H4.5Z" fill="#f8cc70"/><path d="M4.5 14.5H9.5V16C9.5 18 4.5 18 4.5 16Z" fill="#f4f4f4"/></g></svg>
<svg style="left:1535px;top:542.1px;" width="18" height="18" viewBox="0 0 18 18"><circle cx="9" cy="9" r="4.2" fill="#f8cc70"/><path d="M14.50 9.00L17.30 9.00" stroke="#f8cc70" stroke-width="1.3"/><path d="M12.89 12.89L14.87 14.87" stroke="#f8cc70" stroke-width="1.3"/><path d="M9.00 14.50L9.00 17.30" stroke="#f8cc70" stroke-width="1.3"/><path d="M5.11 12.89L3.13 14.87" stroke="#f8cc70" stroke-width="1.3"/><path d="M3.50 9.00L0.70 9.00" stroke="#f8cc70" stroke-width="1.3"/><path d="M5.11 5.11L3.13 3.13" stroke="#f8cc70" stroke-width="1.3"/><path d="M9.00 3.50L9.00 0.70" stroke="#f8cc70" stroke-width="1.3"/><path d="M12.89 5.11L14.87 3.13" stroke="#f8cc70" stroke-width="1.3"/></svg>
<svg style="left:1578.5px;top:541.6px;" width="17" height="18" viewBox="0 0 17 18"><path d="M2 2.5H11.5V13H2Z" fill="#69707c"/><path d="M0.7 4.5V1H4M9.5 1H13V4.5M0.7 10.5V14.2H4" stroke="#d6d6d6" stroke-width="1.3" fill="none"/><g transform="translate(11.3,12.8)" stroke="#5ccfd6" stroke-width="1.9"><path d="M-4 0H4M-2 -3.5L2 3.5M2 -3.5L-2 3.5"/></g></svg>
<svg style="left:1621.5px;top:541.6px;" width="16" height="18" viewBox="0 0 16 18"><g transform="scale(0.86)"><path d="M0 9H13V19H0Z" fill="#f8cc70"/><path d="M9.5 9V5.5C9.5 1.5 16 1.5 16 5.5V8" stroke="#f8cc70" stroke-width="2.2" fill="none"/><path d="M6 12.5H7.5V16H6Z" fill="#4d596e"/></g></svg>
<svg style="left:1644.5px;top:543.6px;" width="17" height="16" viewBox="0 0 17 16"><path d="M4 0H13V4H4Z" fill="#f4f4f4"/><path d="M0.5 4H16.5V11.5H0.5Z" fill="#e0e0e0"/><path d="M3.5 8.5H13.5V14.5H3.5Z" fill="#5cb0f0" stroke="#f4f4f4" stroke-width="1"/></svg>
<div style="left:1668px;top:543.1px;width:13.4px;height:13.4px;background:#0000ff;border:1px solid #d4d4d4"></div>
<div class="t" style="left:1688.27px;top:541.38px;color:#f4f4f4;letter-spacing:0.822px;">blue</div>
<div style="left:1728px;top:543.1px;width:13.4px;height:13.4px;background:#0000ff;border:1px solid #d4d4d4"></div>
<div class="t" style="left:1748.27px;top:541.38px;color:#f4f4f4;letter-spacing:0.822px;">blue</div>
<div class="t" style="left:1787.26px;top:541.38px;color:#f4f4f4;letter-spacing:0.555px;">Continu...</div>
<div class="t" style="left:1868.3px;top:541.4px;width:44.2px;overflow:hidden;color:#f4f4f4;letter-spacing:0.3px">Continuous</div>
<div style="left:1393px;top:561.7px;width:113.8px;height:23px;background:#6c82a6;"></div>
<div style="left:1510.3px;top:561.7px;width:404.2px;height:23px;background:#6c82a6;"></div>
<svg style="left:1395.5px;top:568.6px;" width="17" height="9" viewBox="0 0 17 9"><path d="M6 0.5H16.5L10.5 7.5H0.5Z" fill="#7cc0f4"/><path d="M10.5 7.5L16.5 0.5V1.5L10.8 8.5H0.5V7.5Z" fill="#3b78b4"/></svg>
<div class="t" style="left:1419.58px;top:564.38px;color:#f4f4f4;letter-spacing:0.853px;">triagulo</div>
<svg style="left:1514.5px;top:565.1px;" width="13" height="18" viewBox="0 0 13 18"><g transform="scale(0.88)"><circle cx="7" cy="6.5" r="6.4" fill="#f8cc70"/><path d="M3.8 11H10.2L9.5 14.5H4.5Z" fill="#f8cc70"/><path d="M4.5 14.5H9.5V16C9.5 18 4.5 18 4.5 16Z" fill="#f4f4f4"/></g></svg>
<svg style="left:1535px;top:565.1px;" width="18" height="18" viewBox="0 0 18 18"><circle cx="9" cy="9" r="4.2" fill="#f8cc70"/><path d="M14.50 9.00L17.30 9.00" stroke="#f8cc70" stroke-width="1.3"/><path d="M12.89 12.89L14.87 14.87" stroke="#f8cc70" stroke-width="1.3"/><path d="M9.00 14.50L9.00 17.30" stroke="#f8cc70" stroke-width="1.3"/><path d="M5.11 12.89L3.13 14.87" stroke="#f8cc70" stroke-width="1.3"/><path d="M3.50 9.00L0.70 9.00" stroke="#f8cc70" stroke-width="1.3"/><path d="M5.11 5.11L3.13 3.13" stroke="#f8cc70" stroke-width="1.3"/><path d="M9.00 3.50L9.00 0.70" stroke="#f8cc70" stroke-width="1.3"/><path d="M12.89 5.11L14.87 3.13" stroke="#f8cc70" stroke-width="1.3"/></svg>
<svg style="left:1578.5px;top:564.6px;" width="17" height="18" viewBox="0 0 17 18"><path d="M2 2.5H11.5V13H2Z" fill="#69707c"/><path d="M0.7 4.5V1H4M9.5 1H13V4.5M0.7 10.5V14.2H4" stroke="#d6d6d6" stroke-width="1.3" fill="none"/><g transform="translate(11.3,12.8)" stroke="#5ccfd6" stroke-width="1.9"><path d="M-4 0H4M-2 -3.5L2 3.5M2 -3.5L-2 3.5"/></g></svg>
<svg style="left:1621.5px;top:564.6px;" width="16" height="18" viewBox="0 0 16 18"><g transform="scale(0.86)"><path d="M0 9H13V19H0Z" fill="#f8cc70"/><path d="M9.5 9V5.5C9.5 1.5 16 1.5 16 5.5V8" stroke="#f8cc70" stroke-width="2.2" fill="none"/><path d="M6 12.5H7.5V16H6Z" fill="#4d596e"/></g></svg>
<svg style="left:1644.5px;top:566.6px;" width="17" height="16" viewBox="0 0 17 16"><path d="M4 0H13V4H4Z" fill="#f4f4f4"/><path d="M0.5 4H16.5V11.5H0.5Z" fill="#e0e0e0"/><path d="M3.5 8.5H13.5V14.5H3.5Z" fill="#5cb0f0" stroke="#f4f4f4" stroke-width="1"/></svg>
<div style="left:1668px;top:566.1px;width:13.4px;height:13.4px;background:#00ff00;border:1px solid #d4d4d4"></div>
<div class="t" style="left:1687.09px;top:564.38px;color:#f4f4f4;letter-spacing:0.238px;">gre...</div>
<div style="left:1728px;top:566.1px;width:13.4px;height:13.4px;background:#00ff00;border:1px solid #d4d4d4"></div>
<div class="t" style="left:1747.09px;top:564.38px;color:#f4f4f4;letter-spacing:0.238px;">gre...</div>
<div class="t" style="left:1787.26px;top:564.38px;color:#f4f4f4;letter-spacing:0.555px;">Continu...</div>
<div class="t" style="left:1868.3px;top:564.4px;width:44.2px;overflow:hidden;color:#f4f4f4;letter-spacing:0.3px">Continuous</div>
<div style="left:1393px;top:961.8px;width:520px;height:21px;background:#f0f0f0;"></div>
<div style="left:1414px;top:970.5px;width:300px;height:3.2px;background:#8a8a8a;border-radius:2px"></div>
<svg style="left:1356.5px;top:1003px;" width="20" height="19" viewBox="0 0 20 19"><g transform="scale(0.95)"><path d="M0 1H7L9 3.5H16V14H0Z" fill="#d4d4d4"/><path d="M0 4.5H16V5.5H0Z" fill="#bdbdbd"/></g><path d="M15.5 7L10.5 13.5H14L12 18.5L19 11.5H15.5L17.5 7Z" fill="#f6c244" stroke="#3b4453" stroke-width="0.5"/></svg>
<svg style="left:1380.5px;top:1010.5px;" width="8" height="4.5" viewBox="0 0 8 4.5"><path d="M0 0H8L4.0 4.5Z" fill="#d8d8d8"/></svg>
<div class="t" style="left:1398.27px;top:1003.98px;color:#e8eaee;">All: 10 layers displayed of 10 total layers</div>
<div style="left:1px;top:1039px;width:1918px;height:40px;background:#222933;"></div>
<div style="left:25px;top:1048.5px;width:20px;height:2.2px;background:#e4e4e4;"></div>
<div style="left:25px;top:1054.5px;width:20px;height:2.2px;background:#e4e4e4;"></div>
<div style="left:25px;top:1060.5px;width:20px;height:2.2px;background:#e4e4e4;"></div>
<svg style="left:58px;top:1045.5px;" width="10" height="18" viewBox="0 0 10 18"><path d="M9 0.5L1 17.5" stroke="#596273" stroke-width="1.1"/></svg>
<div class="t" style="left:77.07px;top:1044.80px;font-size:15px;color:#e8e8e8;letter-spacing:0.970px;">Model</div>
<svg style="left:129px;top:1038.5px;" width="102" height="30" viewBox="0 0 102 30"><path d="M2 30L12.5 0H100L89.5 30Z" fill="#3b4453"/></svg>
<div class="t" style="left:152.00px;top:1044.80px;font-size:15px;color:#ffffff;letter-spacing:-0.265px;font-weight:bold;">Layout1</div>
<div class="t" style="left:238.37px;top:1044.80px;font-size:15px;color:#e8e8e8;letter-spacing:-0.099px;">Layout2</div>
<svg style="left:301.5px;top:1045.5px;" width="10" height="18" viewBox="0 0 10 18"><path d="M9 0.5L1 17.5" stroke="#596273" stroke-width="1.1"/></svg>
<svg style="left:324px;top:1045px;" width="18" height="18" viewBox="0 0 18 18"><path d="M9 0V18M0 9H18" stroke="#e4e4e4" stroke-width="2"/></svg>
<svg style="left:353px;top:1045.5px;" width="10" height="18" viewBox="0 0 10 18"><path d="M9 0.5L1 17.5" stroke="#596273" stroke-width="1.1"/></svg>
<div style="left:1039.2px;top:1041px;width:58.799999999999955px;height:29.7px;background:#3b4453;"></div>
<div class="t" style="left:1042.29px;top:1046.80px;font-size:15px;color:#f2f2f2;letter-spacing:-0.300px;transform:scaleX(0.9819);transform-origin:left center;">MODEL</div>
<div style="left:1101.5px;top:1041px;width:79.5px;height:29.7px;background:#3b4453;"></div>
<svg style="left:1106px;top:1045.5px;" width="20" height="20" viewBox="0 0 20 20"><path d="M5 0V20M10 0V20M15 0V20M0 5H20M0 10H20M0 15H20" stroke="#dcdcdc" stroke-width="1.2"/></svg>
<svg style="left:1138px;top:1047px;" width="16" height="16" viewBox="0 0 16 16"><rect x="0" y="0" width="2.6" height="2.6" fill="#dcdcdc"/><rect x="0" y="6.2" width="2.6" height="2.6" fill="#dcdcdc"/><rect x="0" y="12.4" width="2.6" height="2.6" fill="#dcdcdc"/><rect x="6.2" y="0" width="2.6" height="2.6" fill="#dcdcdc"/><rect x="6.2" y="6.2" width="2.6" height="2.6" fill="#dcdcdc"/><rect x="6.2" y="12.4" width="2.6" height="2.6" fill="#dcdcdc"/><rect x="12.4" y="0" width="2.6" height="2.6" fill="#dcdcdc"/><rect x="12.4" y="6.2" width="2.6" height="2.6" fill="#dcdcdc"/><rect x="12.4" y="12.4" width="2.6" height="2.6" fill="#dcdcdc"/></svg>
<svg style="left:1166px;top:1052.5px;" width="10" height="5.5" viewBox="0 0 10 5.5"><path d="M0 0H10L5.0 5.5Z" fill="#d8d8d8"/></svg>
<div style="left:1184px;top:1041px;width:30px;height:29.7px;background:#3b4453;"></div>
<svg style="left:1189px;top:1048px;" width="21" height="16" viewBox="0 0 21 16"><path d="M5 0V10M0 5H10" stroke="#dcdcdc" stroke-width="1.1"/><path d="M8 9.5H20V15H8Z" fill="#dcdcdc"/><path d="M9.2 10.7H12V13.8H9.2Z" fill="#3b4453"/></svg>
<div style="left:1215.3px;top:1041px;width:129.29999999999995px;height:29.7px;background:#3b4453;"></div>
<svg style="left:1220px;top:1046px;" width="21" height="21" viewBox="0 0 21 21"><path d="M1 0V19.5H20.5" stroke="#dcdcdc" stroke-width="1.1" fill="none"/><path d="M1 13.5H7V19.5" stroke="#dcdcdc" stroke-width="1.1" fill="none"/></svg>
<svg style="left:1249px;top:1046px;" width="22" height="21" viewBox="0 0 22 21"><path d="M15.5 14.5A7.5 7.5 0 1 1 13 5.5" stroke="#dcdcdc" stroke-width="1.1" fill="none"/><path d="M8.5 11.5L17 1M8.5 11.5H21" stroke="#dcdcdc" stroke-width="1.2" fill="none"/></svg>
<svg style="left:1280px;top:1052.5px;" width="10" height="5.5" viewBox="0 0 10 5.5"><path d="M0 0H10L5.0 5.5Z" fill="#d8d8d8"/></svg>
<svg style="left:1301px;top:1045px;" width="18" height="22" viewBox="0 0 18 22"><path d="M10 1.5V20" stroke="#48d070" stroke-width="1.1"/><path d="M2.5 2.5L17 18.5" stroke="#f05050" stroke-width="1.1"/><rect x="8" y="9.5" width="3.6" height="3.6" fill="#3b4453" stroke="#dcdcdc" stroke-width="1"/></svg>
<svg style="left:1330px;top:1052.5px;" width="10" height="5.5" viewBox="0 0 10 5.5"><path d="M0 0H10L5.0 5.5Z" fill="#d8d8d8"/></svg>
<div style="left:1346.8px;top:1041px;width:28px;height:29.7px;background:#5b8ecf;"></div>
<svg style="left:1350px;top:1046px;" width="23" height="21" viewBox="0 0 23 21"><path d="M1 19.5H22" stroke="#f0f0f0" stroke-width="1.1"/><path d="M2 19L20 2" stroke="#f0f0f0" stroke-width="1.1"/><rect x="9" y="9" width="3.6" height="3.6" fill="#f0f0f0"/></svg>
<div style="left:1377px;top:1041px;width:28px;height:29.7px;background:#5b8ecf;"></div>
<svg style="left:1380px;top:1044px;" width="23" height="23" viewBox="0 0 23 23"><path d="M4.5 4.5H21V21H4.5Z" fill="none" stroke="#f0f0f0" stroke-width="1.4"/><rect x="1.5" y="1.5" width="5.5" height="5.5" fill="#5b8ecf" stroke="#f0f0f0" stroke-width="1.2"/></svg>
<div style="left:1405px;top:1041px;width:20.59999999999991px;height:29.7px;background:#3b4453;"></div>
<svg style="left:1411px;top:1052.5px;" width="10" height="5.5" viewBox="0 0 10 5.5"><path d="M0 0H10L5.0 5.5Z" fill="#d8d8d8"/></svg>
<div style="left:1429px;top:1041px;width:199.5px;height:29.7px;background:#3b4453;"></div>
<svg style="left:1433.5px;top:1045px;" width="22" height="22" viewBox="0 0 22 22"><path d="M1 5V1H5M9 1H13M17 1H21V5M21 9V13M21 17V21H17M13 21H9M5 21H1V17M1 13V9" stroke="#dcdcdc" stroke-width="1.1" fill="none"/><path d="M6.5 8.5H16.5V17H6.5Z" stroke="#dcdcdc" stroke-width="1.2" fill="none"/><path d="M3 3L8 7" stroke="#dcdcdc" stroke-width="1.2"/></svg>
<svg style="left:1464px;top:1045px;" width="22" height="21" viewBox="0 0 22 21"><path d="M9 1L12 10.5L17.5 19L10.5 15L9 19.5L7.5 15L0.5 19L6 10.5Z" fill="#dcdcdc"/><circle cx="17.5" cy="4" r="2.4" stroke="#dcdcdc" stroke-width="1.1" fill="none"/></svg>
<svg style="left:1494px;top:1045px;" width="22" height="21" viewBox="0 0 22 21"><path d="M9 1L12 10.5L17.5 19L10.5 15L9 19.5L7.5 15L0.5 19L6 10.5Z" fill="#dcdcdc"/><path d="M18 0L15 4.5H17.5L15.5 9L20.5 3.5H18L20 0Z" fill="#dcdcdc"/></svg>
<svg style="left:1524px;top:1044px;" width="19" height="23" viewBox="0 0 19 23"><path d="M0.5 10H18.5V22.5H0.5Z" fill="#6cb8f0"/><path d="M4 10V6.5C4 0 15 0 15 6.5V10" stroke="#6cb8f0" stroke-width="2.4" fill="none"/><path d="M8.5 13.5H10.5V19H8.5Z" fill="#3b4453"/></svg>
<svg style="left:1555px;top:1047px;" width="18" height="17" viewBox="0 0 18 17"><path d="M1 4V1H4.5M13.5 1H17V4M17 13V16H13.5M4.5 16H1V13" stroke="#69717f" stroke-width="1.1" fill="none"/><path d="M4.5 6.5H12V13H4.5Z" stroke="#69717f" stroke-width="1.2" fill="none"/></svg>
<div class="t" style="left:1584.24px;top:1046.80px;font-size:15px;color:#8d96a4;letter-spacing:-0.300px;transform:scaleX(0.9298);transform-origin:left center;">1:10</div>
<svg style="left:1613.5px;top:1052.5px;" width="10" height="5.5" viewBox="0 0 10 5.5"><path d="M0 0H10L5.0 5.5Z" fill="#8d96a4"/></svg>
<div style="left:1630px;top:1041px;width:28px;height:29.7px;background:#5b8ecf;"></div>
<svg style="left:1633px;top:1044px;" width="23" height="23" viewBox="0 0 23 23"><path d="M2.5 3.5H20.5V17H2.5Z" stroke="#f0f0f0" stroke-width="1.4" fill="none"/><path d="M0.8 5V1.5H4M18.5 1.5H22V5M0.8 15V18.5H4" stroke="#f0f0f0" stroke-width="1.2" fill="none"/><g transform="translate(7.5,8) scale(0.78)"><path d="M9 1L12 10.5L17.5 19L10.5 15L9 19.5L7.5 15L0.5 19L6 10.5Z" fill="#f0f0f0"/></g></svg>
<div style="left:1661.7px;top:1041px;width:50.299999999999955px;height:29.7px;background:#3b4453;"></div>
<svg style="left:1666px;top:1045px;" width="22" height="22" viewBox="0 0 22 22"><g transform="translate(11,11)"><rect x="-2.3" y="-10.5" width="4.6" height="6" fill="#dcdcdc" transform="rotate(0)"/><rect x="-2.3" y="-10.5" width="4.6" height="6" fill="#dcdcdc" transform="rotate(45)"/><rect x="-2.3" y="-10.5" width="4.6" height="6" fill="#dcdcdc" transform="rotate(90)"/><rect x="-2.3" y="-10.5" width="4.6" height="6" fill="#dcdcdc" transform="rotate(135)"/><rect x="-2.3" y="-10.5" width="4.6" height="6" fill="#dcdcdc" transform="rotate(180)"/><rect x="-2.3" y="-10.5" width="4.6" height="6" fill="#dcdcdc" transform="rotate(225)"/><rect x="-2.3" y="-10.5" width="4.6" height="6" fill="#dcdcdc" transform="rotate(270)"/><rect x="-2.3" y="-10.5" width="4.6" height="6" fill="#dcdcdc" transform="rotate(315)"/><circle r="7.3" fill="#dcdcdc"/><circle r="3.2" fill="#3b4453"/></g></svg>
<svg style="left:1696.5px;top:1052.5px;" width="10" height="5.5" viewBox="0 0 10 5.5"><path d="M0 0H10L5.0 5.5Z" fill="#d8d8d8"/></svg>
<div style="left:1714px;top:1041px;width:29.299999999999955px;height:29.7px;background:#3b4453;"></div>
<svg style="left:1717.5px;top:1046px;" width="20" height="20" viewBox="0 0 20 20"><path d="M10 0V20M0 10H20" stroke="#f0f0f0" stroke-width="2.2"/></svg>
<div style="left:1745.4px;top:1041px;width:31.59999999999991px;height:29.7px;background:#3b4453;"></div>
<svg style="left:1750.5px;top:1045.5px;" width="22" height="21" viewBox="0 0 22 21"><path d="M1 1H8V8H1Z" stroke="#dcdcdc" stroke-width="1.2" fill="none"/><circle cx="17" cy="9" r="3.6" stroke="#dcdcdc" stroke-width="1.2" fill="none"/><path d="M8 12.5L12.5 20H3.5Z" stroke="#dcdcdc" stroke-width="1.2" fill="none"/></svg>
<div style="left:1779.6px;top:1041px;width:67.90000000000009px;height:29.7px;background:#3b4453;"></div>
<svg style="left:1783px;top:1042px;" width="27" height="28" viewBox="0 0 27 28"><path d="M10.5 1.5L19 6V15L10.5 19.5L2 15V6Z" fill="#2f6fc0"/><path d="M10.5 1.5L19 6L10.5 10.5L2 6Z" fill="#6cb0ee"/><path d="M10.5 10.5V19.5L19 15V6Z" fill="#1f55a0"/><path d="M10.5 0V10.5M1 6H10.5" stroke="#e8e8e8" stroke-width="1"/><path d="M1 15H9L12 18V24H1Z" fill="#f2b830"/><path d="M12 20L16 24.5L25.5 14" stroke="#48c060" stroke-width="3" fill="none"/></svg>
<svg style="left:1817px;top:1046px;" width="22" height="23" viewBox="0 0 22 23"><path d="M10 2A8.5 8.5 0 0 1 19 16" stroke="#dcdcdc" stroke-width="1.4" fill="none"/><path d="M12 5V11H16.5" stroke="#dcdcdc" stroke-width="1.1" fill="none"/><path d="M6 3.5L10 5.5L6 7.5Z" fill="#dcdcdc"/><path d="M0.5 9H6.5L8.5 11V20.5H0.5Z" fill="#2f6fc0" stroke="#e8e8e8" stroke-width="0.9"/><path d="M1 16.5H5L8 19V20H1Z" fill="#f2b830"/><path d="M1 13H8" stroke="#bcd8f4" stroke-width="1"/><circle cx="16" cy="18" r="3.8" fill="#5cb2ee"/><path d="M16 17V20.3" stroke="#fff" stroke-width="1.2"/><circle cx="16" cy="15.6" r="0.7" fill="#fff"/></svg>
<div style="left:1851px;top:1041px;width:29.799999999999955px;height:29.7px;background:#3b4453;"></div>
<svg style="left:1855.5px;top:1048px;" width="21" height="15" viewBox="0 0 21 15"><path d="M0.6 0.6H20.4V14.4H0.6Z" stroke="#dcdcdc" stroke-width="1.2" fill="none"/><path d="M17.5 3L13 7.5M17.5 3H13.8M17.5 3V6.7M3.5 12L8 7.5M3.5 12H7.2M3.5 12V8.3" stroke="#dcdcdc" stroke-width="1.1" fill="none"/></svg>
<div style="left:1883px;top:1041px;width:30px;height:29.7px;background:#3b4453;"></div>
<div style="left:1888.5px;top:1047.5px;width:19.5px;height:2.2px;background:#e4e4e4;"></div>
<div style="left:1888.5px;top:1053.7px;width:19.5px;height:2.2px;background:#e4e4e4;"></div>
<div style="left:1888.5px;top:1059.9px;width:19.5px;height:2.2px;background:#e4e4e4;"></div>
<svg style="left:1535px;top:901px;" width="382" height="153" viewBox="0 0 382 153"><path d="M17 3H363C372 3 378 9.500 378 18V112C378 120.500 372 127 363 127H290.500V149.500L267.500 127H17C8 127 2 120.500 2 112V18C2 9.500 8 3 17 3Z" fill="#ffffe1" stroke="#000" stroke-width="1.2"/></svg>
<svg style="left:1549px;top:916px;" width="20" height="20" viewBox="0 0 20 20"><defs><radialGradient id="ig" cx="0.4" cy="0.3" r="0.8"><stop offset="0" stop-color="#7aa2ee"/><stop offset="1" stop-color="#1038b8"/></radialGradient></defs><circle cx="10" cy="10" r="9.3" fill="url(#ig)" stroke="#b8c4dc" stroke-width="1"/><path d="M8.3 8.5H11.2V15.5H8.3Z" fill="#fff"/><circle cx="9.8" cy="5.5" r="1.6" fill="#fff"/></svg>
<div class="t" style="left:1582.20px;top:916.80px;font-size:15px;color:#000;font-weight:bold;">View Drawing History</div>
<div style="left:1881px;top:915.8px;width:18.5px;height:18.5px;background:#f4f4f4;border:1px solid #8a8a8a"></div>
<svg style="left:1885px;top:919.8px;" width="12" height="12" viewBox="0 0 12 12"><path d="M1 1L11 11M11 1L1 11" stroke="#000" stroke-width="1.8"/></svg>
<div class="t" style="left:1554.68px;top:944.98px;color:#000;letter-spacing:0.126px;">You can view and compare previous versions in the</div>
<div class="t" style="left:1553.81px;top:965.28px;color:#000;letter-spacing:0.335px;">Drawing History palette by signing into OneDrive.</div>
<div class="t" style="left:1554.34px;top:992.78px;color:#0000ee;letter-spacing:0.254px;text-decoration:underline">Sign in to OneDrive</div>
<div style="left:0;top:0;width:1917px;height:1078px;border:1px solid #1b8fd8;border-right-width:2px;border-radius:9px;pointer-events:none"></div>
<div style="left:0px;top:271.3px;width:26.8px;height:630px;background:#2d3440;border-radius:0 6px 6px 0;border:1px solid #20252e;border-left:none"></div>
<svg style="left:8.5px;top:280px;" width="11" height="10" viewBox="0 0 11 10"><path d="M1.3 1.3L9.7 8.7M9.7 1.3L1.3 8.7" stroke="#c8c8c8" stroke-width="2.4"/></svg>
<svg style="left:8px;top:303px;" width="13" height="13" viewBox="0 0 13 13"><path d="M1.2 1V12M0.5 11.5H4" stroke="#c0c0c0" stroke-width="1.2"/><path d="M3 5H7V2.2L12 6.2L7 10.2V7.5H3Z" fill="#c0c0c0"/></svg>
<svg style="left:7px;top:326px;" width="14" height="14" viewBox="0 0 14 14"><g transform="translate(7,7)"><rect x="-1.5" y="-7" width="3" height="4" fill="#c4c4c4" transform="rotate(0)"/><rect x="-1.5" y="-7" width="3" height="4" fill="#c4c4c4" transform="rotate(45)"/><rect x="-1.5" y="-7" width="3" height="4" fill="#c4c4c4" transform="rotate(90)"/><rect x="-1.5" y="-7" width="3" height="4" fill="#c4c4c4" transform="rotate(135)"/><rect x="-1.5" y="-7" width="3" height="4" fill="#c4c4c4" transform="rotate(180)"/><rect x="-1.5" y="-7" width="3" height="4" fill="#c4c4c4" transform="rotate(225)"/><rect x="-1.5" y="-7" width="3" height="4" fill="#c4c4c4" transform="rotate(270)"/><rect x="-1.5" y="-7" width="3" height="4" fill="#c4c4c4" transform="rotate(315)"/><circle r="4.6" fill="#c4c4c4"/><circle r="1.9" fill="#2d3440"/></g></svg>
<div class="t" style="left:-60px;top:792.5px;width:150px;height:20px;transform:rotate(-90deg);transform-origin:center;color:#c9ced6;font-size:15.5px;letter-spacing:-1.117px;text-align:center">ACTIVITY INSIGHTS</div>
<svg style="left:4px;top:878px;" width="21" height="23" viewBox="0 0 21 23"><path d="M1 3H15V20H1Z" fill="#d0d0d0"/><path d="M5 1H11V5H5Z" fill="#f2f2f2"/><path d="M3.5 8H12.5M3.5 11.5H12.5M3.5 15H9" stroke="#4a84c4" stroke-width="1.4"/><path d="M16 9L11 16H14.5L12.5 22L19.5 13.5H16L18 9Z" fill="#f6c244"/></svg>
</div></body></html>
